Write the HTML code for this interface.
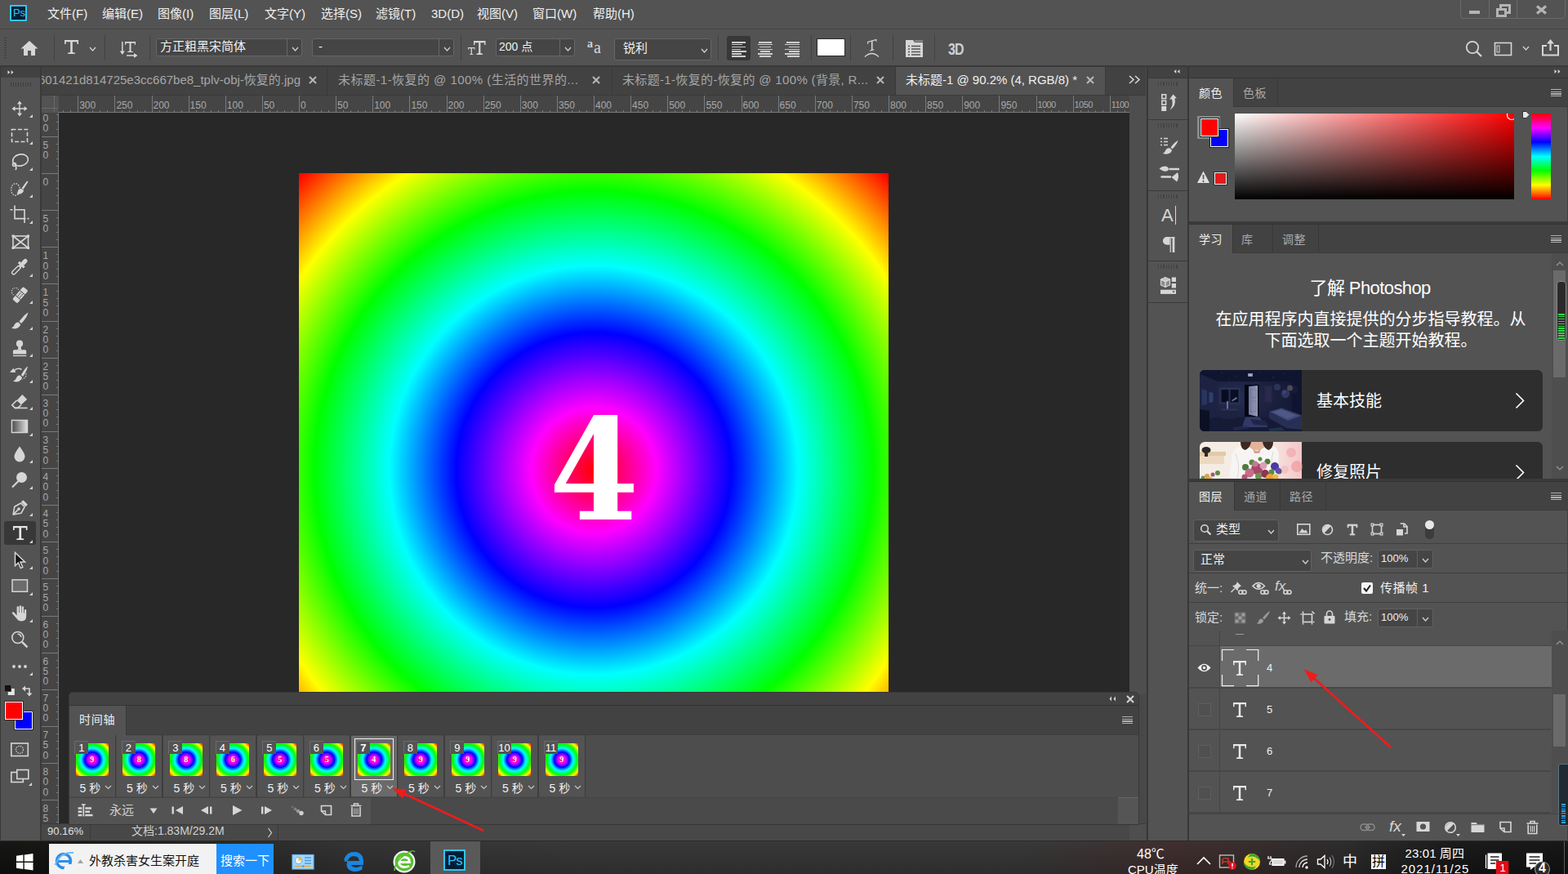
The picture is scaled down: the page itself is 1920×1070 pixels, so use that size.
<!DOCTYPE html><html lang="zh"><head><meta charset="utf-8"><title>Photoshop</title><style>
*{box-sizing:border-box;margin:0;padding:0}
html,body{width:1920px;height:1070px;overflow:hidden;background:#535353}
body{font-family:"Liberation Sans","Noto Sans CJK SC",sans-serif;font-size:15px;color:#e6e6e6;position:relative}
.a{position:absolute}
.t{position:absolute;white-space:nowrap;line-height:1}
svg{position:absolute;overflow:visible}
</style></head><body>
<div class="a" style="left:0px;top:0px;width:1920px;height:35px;background:#535353;"></div>
<div class="a" style="left:0px;top:35px;width:1920px;height:1px;background:#424242;"></div>
<div class="a" style="left:0px;top:36px;width:1920px;height:44px;background:#535353;"></div>
<div class="a" style="left:0px;top:80px;width:1920px;height:2px;background:#3a3a3a;"></div>
<div class="a" style="left:0px;top:82px;width:48.5px;height:948px;background:#535353;"></div>
<div class="a" style="left:0px;top:82px;width:48.5px;height:13px;background:#424242;"></div>
<div class="a" style="left:48.5px;top:82px;width:2.5px;height:948px;background:#3a3a3a;"></div>
<div class="a" style="left:51px;top:82px;width:1352px;height:34px;background:#424242;"></div>
<div class="a" style="left:51px;top:116px;width:1352px;height:914px;background:#454545;"></div>
<div class="a" style="left:1383px;top:117px;width:20px;height:913px;background:#4e4e4e;"></div>
<div class="a" style="left:72px;top:138px;width:1311px;height:870px;background:#282828;"></div>
<div class="a" style="left:1403px;top:82px;width:1px;height:948px;background:#4a4a4a;"></div>
<div class="a" style="left:1404px;top:82px;width:2px;height:948px;background:#383838;"></div>
<div class="a" style="left:1406px;top:82px;width:48px;height:948px;background:#535353;"></div>
<div class="a" style="left:1406px;top:82px;width:48px;height:13px;background:#424242;"></div>
<div class="a" style="left:1453.5px;top:82px;width:2.5px;height:948px;background:#383838;"></div>
<div class="a" style="left:1456px;top:82px;width:464px;height:948px;background:#535353;"></div>
<div class="a" style="left:1456px;top:82px;width:464px;height:13px;background:#424242;"></div>
<div class="a" style="left:0px;top:1030px;width:1920px;height:40px;background:#2d2d2d;"></div>
<div class="a" style="left:12px;top:6px;width:21px;height:20px;background:#001e36;border:2px solid #31c5f0;border-radius:1px"></div>
<div class="t" style="left:16px;top:9px;font-size:13px;color:#31c5f0;letter-spacing:-0.2px">Ps</div>
<div class="t" style="left:58px;top:9px;font-size:15px;color:#f0f0f0;">文件(F)</div>
<div class="t" style="left:125px;top:9px;font-size:15px;color:#f0f0f0;">编辑(E)</div>
<div class="t" style="left:193px;top:9px;font-size:15px;color:#f0f0f0;">图像(I)</div>
<div class="t" style="left:256px;top:9px;font-size:15px;color:#f0f0f0;">图层(L)</div>
<div class="t" style="left:324px;top:9px;font-size:15px;color:#f0f0f0;">文字(Y)</div>
<div class="t" style="left:393px;top:9px;font-size:15px;color:#f0f0f0;">选择(S)</div>
<div class="t" style="left:460px;top:9px;font-size:15px;color:#f0f0f0;">滤镜(T)</div>
<div class="t" style="left:528px;top:9px;font-size:15px;color:#f0f0f0;">3D(D)</div>
<div class="t" style="left:584px;top:9px;font-size:15px;color:#f0f0f0;">视图(V)</div>
<div class="t" style="left:652px;top:9px;font-size:15px;color:#f0f0f0;">窗口(W)</div>
<div class="t" style="left:726px;top:9px;font-size:15px;color:#f0f0f0;">帮助(H)</div>
<div class="a" style="left:1788px;top:-1px;width:129px;height:24px;border:1px solid #6a6a6a;border-radius:0 0 4px 4px"></div>
<div class="a" style="left:1823px;top:0px;width:1px;height:23px;background:#6a6a6a;"></div>
<div class="a" style="left:1857px;top:0px;width:1px;height:23px;background:#6a6a6a;"></div>
<div class="a" style="left:1799px;top:12.5px;width:13px;height:4.5px;background:#b4b4b4;"></div>
<svg style="left:1830px;top:4px" width="22" height="18"><rect x="7.5" y="2.5" width="11" height="9" fill="none" stroke="#b4b4b4" stroke-width="3"/><rect x="3.5" y="7.5" width="10" height="8" fill="#535353" stroke="#b4b4b4" stroke-width="3"/></svg>
<svg style="left:1880px;top:6px" width="16" height="12"><path d="M2 1.5 L13 10.5 M13 1.5 L2 10.5" stroke="#b4b4b4" stroke-width="3.2"/></svg>
<div class="a" style="left:5px;top:46px;width:3px;height:1px;background:#3e3e3e;"></div>
<div class="a" style="left:5px;top:49px;width:3px;height:1px;background:#3e3e3e;"></div>
<div class="a" style="left:5px;top:52px;width:3px;height:1px;background:#3e3e3e;"></div>
<div class="a" style="left:5px;top:55px;width:3px;height:1px;background:#3e3e3e;"></div>
<div class="a" style="left:5px;top:58px;width:3px;height:1px;background:#3e3e3e;"></div>
<div class="a" style="left:5px;top:61px;width:3px;height:1px;background:#3e3e3e;"></div>
<div class="a" style="left:5px;top:64px;width:3px;height:1px;background:#3e3e3e;"></div>
<div class="a" style="left:5px;top:67px;width:3px;height:1px;background:#3e3e3e;"></div>
<div class="a" style="left:5px;top:70px;width:3px;height:1px;background:#3e3e3e;"></div>
<svg style="left:24px;top:48px" width="24" height="22"><path d="M12 2 L1.5 11.5 H5 V20 H10 V14 H14 V20 H19 V11.5 H22.5 Z" fill="#d6d6d6"/></svg>
<div class="a" style="left:66px;top:43px;width:1px;height:31px;background:#424242;"></div>
<div class="a" style="left:128px;top:43px;width:1px;height:31px;background:#424242;"></div>
<div class="a" style="left:183px;top:43px;width:1px;height:31px;background:#424242;"></div>
<div class="a" style="left:564px;top:43px;width:1px;height:31px;background:#424242;"></div>
<div class="a" style="left:879px;top:43px;width:1px;height:31px;background:#424242;"></div>
<div class="a" style="left:993px;top:43px;width:1px;height:31px;background:#424242;"></div>
<div class="a" style="left:1041px;top:43px;width:1px;height:31px;background:#424242;"></div>
<div class="a" style="left:1093px;top:43px;width:1px;height:31px;background:#424242;"></div>
<div class="a" style="left:1144px;top:43px;width:1px;height:31px;background:#424242;"></div>
<svg style="left:79px;top:49px" width="17" height="17" viewBox="0 0 17 17" preserveAspectRatio="none"><path d="M0 0 H17 V5 H15.400 V2.200 H9.800 V14.800 Q9.800 15.500 12.800 15.600 V17 H4.200 V15.600 Q7.200 15.500 7.200 14.800 V2.200 H1.600 V5 H0 Z" fill="#d6d6d6" stroke="#d6d6d6" stroke-width="0"/></svg>
<svg style="left:109px;top:57px" width="9" height="6"><path d="M1 1 L4.5 5 L8 1" fill="none" stroke="#d0d0d0" stroke-width="1.3"/></svg>
<svg style="left:145px;top:48px" width="26" height="24"><path d="M4.800 3 V17" fill="none" stroke="#d6d6d6" stroke-width="1.500"/><path d="M1.800 14.500 H7.800 L4.800 19 Z" fill="#d6d6d6"/><path d="M10 20 H20" fill="none" stroke="#d6d6d6" stroke-width="1.500"/><path d="M19 17 V23 L23.500 20 Z" fill="#d6d6d6"/></svg>
<svg style="left:153px;top:51px" width="13" height="13" viewBox="0 0 17 17" preserveAspectRatio="none"><path d="M0 0 H17 V5 H15.400 V2.200 H9.800 V14.800 Q9.800 15.500 12.800 15.600 V17 H4.200 V15.600 Q7.200 15.500 7.200 14.800 V2.200 H1.600 V5 H0 Z" fill="#d6d6d6" stroke="#d6d6d6" stroke-width="0"/></svg>
<div class="a" style="left:191px;top:47px;width:179px;height:22px;background:#454545;border:1px solid #666;border-radius:3px"></div>
<div class="a" style="left:351px;top:48px;width:1px;height:20px;background:#666;"></div>
<div class="t" style="left:196px;top:49px;font-size:15px;color:#f0f0f0;">方正粗黑宋简体</div>
<svg style="left:357px;top:57px" width="9" height="6"><path d="M1 1 L4.5 5 L8 1" fill="none" stroke="#d0d0d0" stroke-width="1.3"/></svg>
<div class="a" style="left:382px;top:47px;width:174px;height:22px;background:#454545;border:1px solid #666;border-radius:3px"></div>
<div class="a" style="left:537px;top:48px;width:1px;height:20px;background:#666;"></div>
<div class="t" style="left:390px;top:49px;font-size:15px;color:#f0f0f0;">-</div>
<svg style="left:543px;top:57px" width="9" height="6"><path d="M1 1 L4.5 5 L8 1" fill="none" stroke="#d0d0d0" stroke-width="1.3"/></svg>
<svg style="left:573px;top:58px" width="8.5" height="9" viewBox="0 0 17 17" preserveAspectRatio="none"><path d="M0 0 H17 V5 H15.400 V2.200 H9.800 V14.800 Q9.800 15.500 12.800 15.600 V17 H4.200 V15.600 Q7.200 15.500 7.200 14.800 V2.200 H1.600 V5 H0 Z" fill="#d6d6d6" stroke="#d6d6d6" stroke-width="0"/></svg>
<svg style="left:580px;top:50px" width="14.5" height="17" viewBox="0 0 17 17" preserveAspectRatio="none"><path d="M0 0 H17 V5 H15.400 V2.200 H9.800 V14.800 Q9.800 15.500 12.800 15.600 V17 H4.200 V15.600 Q7.200 15.500 7.200 14.800 V2.200 H1.600 V5 H0 Z" fill="#d6d6d6" stroke="#d6d6d6" stroke-width="0"/></svg>
<div class="a" style="left:607px;top:47px;width:97px;height:22px;background:#454545;border:1px solid #666;border-radius:3px"></div>
<div class="a" style="left:685px;top:48px;width:1px;height:20px;background:#666;"></div>
<div class="t" style="left:611px;top:50px;font-size:14px;color:#f0f0f0;">200 点</div>
<svg style="left:691px;top:57px" width="9" height="6"><path d="M1 1 L4.5 5 L8 1" fill="none" stroke="#d0d0d0" stroke-width="1.3"/></svg>
<div class="t" style="left:719px;top:47px;font-size:14px;color:#d6d6d6;font-family:'Liberation Serif',serif;font-weight:bold">a</div>
<div class="t" style="left:727px;top:48px;font-size:20px;color:#d6d6d6;font-family:'Liberation Serif',serif">a</div>
<div class="a" style="left:752px;top:47px;width:119px;height:27px;background:#454545;border:1px solid #666;border-radius:3px"></div>
<div class="t" style="left:763px;top:51px;font-size:15px;color:#f0f0f0;">锐利</div>
<svg style="left:858px;top:59px" width="9" height="6"><path d="M1 1 L4.5 5 L8 1" fill="none" stroke="#d0d0d0" stroke-width="1.3"/></svg>
<div class="a" style="left:890px;top:44px;width:29px;height:30px;background:#383838;border-radius:3px"></div>
<div class="a" style="left:896px;top:51.0px;width:17px;height:1.500px;background:#cdcdcd"></div>
<div class="a" style="left:896px;top:53.9px;width:13px;height:1.500px;background:#cdcdcd"></div>
<div class="a" style="left:896px;top:56.7px;width:17px;height:1.500px;background:#cdcdcd"></div>
<div class="a" style="left:896px;top:59.5px;width:11px;height:1.500px;background:#cdcdcd"></div>
<div class="a" style="left:896px;top:62.4px;width:18px;height:1.500px;background:#cdcdcd"></div>
<div class="a" style="left:896px;top:65.2px;width:12px;height:1.500px;background:#cdcdcd"></div>
<div class="a" style="left:896px;top:68.1px;width:17px;height:1.500px;background:#cdcdcd"></div>
<div class="a" style="left:929.0px;top:51.0px;width:16px;height:1.500px;background:#cdcdcd"></div>
<div class="a" style="left:928.0px;top:53.9px;width:18px;height:1.500px;background:#cdcdcd"></div>
<div class="a" style="left:930.0px;top:56.7px;width:14px;height:1.500px;background:#cdcdcd"></div>
<div class="a" style="left:928.0px;top:59.5px;width:18px;height:1.500px;background:#cdcdcd"></div>
<div class="a" style="left:931.0px;top:62.4px;width:12px;height:1.500px;background:#cdcdcd"></div>
<div class="a" style="left:928.0px;top:65.2px;width:18px;height:1.500px;background:#cdcdcd"></div>
<div class="a" style="left:930.0px;top:68.1px;width:14px;height:1.500px;background:#cdcdcd"></div>
<div class="a" style="left:963px;top:51.0px;width:16px;height:1.500px;background:#cdcdcd"></div>
<div class="a" style="left:961px;top:53.9px;width:18px;height:1.500px;background:#cdcdcd"></div>
<div class="a" style="left:966px;top:56.7px;width:13px;height:1.500px;background:#cdcdcd"></div>
<div class="a" style="left:961px;top:59.5px;width:18px;height:1.500px;background:#cdcdcd"></div>
<div class="a" style="left:966px;top:62.4px;width:13px;height:1.500px;background:#cdcdcd"></div>
<div class="a" style="left:961px;top:65.2px;width:18px;height:1.500px;background:#cdcdcd"></div>
<div class="a" style="left:964px;top:68.1px;width:15px;height:1.500px;background:#cdcdcd"></div>
<div class="a" style="left:1000px;top:47px;width:35px;height:22px;background:#fff;border:1px solid #2a2a2a"></div>
<svg style="left:1059px;top:48px" width="17.500" height="15.750" viewBox="0 0 20 18"><g transform="translate(10 9) skewY(-16) translate(-10 -9)"><path d="M3.500 1.500 H16.500 V5 H15.300 V3 H10.900 V14.300 Q10.900 14.800 13 14.900 V16 H7 V14.900 Q9.100 14.800 9.100 14.300 V3 H4.700 V5 H3.500 Z" fill="#d6d6d6"/></g></svg>
<svg style="left:1057px;top:62px" width="22" height="10"><path d="M2 7.500 Q10.500 -0.500 19 7.500" fill="none" stroke="#d6d6d6" stroke-width="1.500"/></svg>
<svg style="left:1108px;top:48px" width="24" height="24"><path d="M1 1 H10 L12 4 H22 V22 H1 Z" fill="#d6d6d6"/><rect x="12" y="1.5" width="10" height="1.5" fill="#9a9a9a"/><g stroke="#535353" stroke-width="1.5"><path d="M4 8.5 H6 M8 8.5 H19 M4 12 H6 M8 12 H19 M4 15.5 H6 M8 15.5 H19 M4 19 H6 M8 19 H19"/></g></svg>
<div class="t" style="left:1161px;top:49px;font-size:21px;color:#cfcfcf;font-weight:bold;letter-spacing:-1px;transform:scaleX(0.760);transform-origin:0 0">3D</div>
<svg style="left:1793px;top:48px" width="24" height="24"><circle cx="10" cy="10" r="7.2" fill="none" stroke="#d6d6d6" stroke-width="1.8"/><path d="M15.5 15.5 L21 21" stroke="#d6d6d6" stroke-width="2.2"/></svg>
<svg style="left:1829px;top:51px" width="24" height="19"><rect x="1.5" y="1.5" width="20" height="15" fill="none" stroke="#d6d6d6" stroke-width="1.6"/><rect x="4" y="5" width="3" height="8" fill="none" stroke="#d6d6d6" stroke-width="1"/></svg>
<svg style="left:1864px;top:56px" width="9" height="6"><path d="M1 1 L4.5 5 L8 1" fill="none" stroke="#d0d0d0" stroke-width="1.3"/></svg>
<svg style="left:1887px;top:47px" width="24" height="23"><path d="M7 9 H2 V20.5 H21 V9 H16" fill="none" stroke="#d6d6d6" stroke-width="2"/><path d="M11.5 15 V4" stroke="#d6d6d6" stroke-width="2.2"/><path d="M7 6.5 L11.5 1 L16 6.5 Z" fill="#d6d6d6"/></svg>
<svg style="left:9px;top:85px" width="9" height="7"><path d="M0.500 1 L3.300 3.500 L0.500 6 Z M4.700 1 L7.500 3.500 L4.700 6 Z" fill="#d6d6d6"/></svg>
<svg style="left:1437px;top:84px" width="9" height="7"><path d="M3.300 1 L0.500 3.500 L3.300 6 Z M7.500 1 L4.700 3.500 L7.500 6 Z" fill="#d6d6d6"/></svg>
<svg style="left:1903px;top:84px" width="9" height="7"><path d="M0.500 1 L3.300 3.500 L0.500 6 Z M4.700 1 L7.500 3.500 L4.700 6 Z" fill="#d6d6d6"/></svg>
<div class="a" style="left:1097px;top:82px;width:257px;height:34px;background:#535353;"></div>
<div class="a" style="left:400px;top:82px;width:1px;height:34px;background:#3a3a3a;"></div>
<div class="a" style="left:749px;top:82px;width:1px;height:34px;background:#3a3a3a;"></div>
<div class="a" style="left:1096px;top:82px;width:1px;height:34px;background:#3a3a3a;"></div>
<div class="a" style="left:1353px;top:82px;width:1px;height:34px;background:#3a3a3a;"></div>
<div class="a" style="left:51px;top:82px;width:331px;height:34px;overflow:hidden"><div class="t" style="right:14px;top:8px;font-size:15px;color:#a6a6a6">601421d814725e3cc667be8_tplv-obj-恢复的.jpg</div></div>
<div class="t" style="letter-spacing:0.46px;left:414px;top:90px;font-size:15px;color:#a6a6a6;">未标题-1-恢复的 @ 100% (生活的世界的...</div>
<div class="t" style="letter-spacing:0.34px;left:762px;top:90px;font-size:15px;color:#a6a6a6;">未标题-1-恢复的-恢复的 @ 100% (背景, R...</div>
<div class="t" style="letter-spacing:-0.01px;left:1109px;top:90px;font-size:15px;color:#f0f0f0;">未标题-1 @ 90.2% (4, RGB/8) *</div>
<svg style="left:378px;top:93px" width="10" height="10"><path d="M1 1 L9 9 M9 1 L1 9" stroke="#b8b8b8" stroke-width="2"/></svg>
<svg style="left:725px;top:93px" width="10" height="10"><path d="M1 1 L9 9 M9 1 L1 9" stroke="#b8b8b8" stroke-width="2"/></svg>
<svg style="left:1073px;top:93px" width="10" height="10"><path d="M1 1 L9 9 M9 1 L1 9" stroke="#b8b8b8" stroke-width="2"/></svg>
<svg style="left:1330px;top:93px" width="10" height="10"><path d="M1 1 L9 9 M9 1 L1 9" stroke="#b8b8b8" stroke-width="2"/></svg>
<svg style="left:1382px;top:92px" width="16" height="12"><path d="M1 1 L6 5.5 L1 10 M8 1 L13 5.5 L8 10" fill="none" stroke="#d6d6d6" stroke-width="1.6"/></svg>
<div class="a" style="left:52px;top:116px;width:1351px;height:1px;background:#3a3a3a;"></div>
<div class="a" style="left:51px;top:117px;width:21px;height:21px;background:#535353;"></div>
<div class="a" style="left:51px;top:132px;width:19px;height:0;border-top:1px dotted #7c7c7c"></div>
<div class="a" style="left:66px;top:117px;width:0;height:20px;border-left:1px dotted #7c7c7c"></div>
<div class="a" style="left:72px;top:117px;width:1311px;height:21px;overflow:hidden;background:#454545">
<div class="a" style="left:-21.9px;top:0;width:1px;height:21px;background:#7a7a7a"></div>
<div class="t" style="left:-19.9px;top:5.500px;font-size:12px;color:#a8a8a8;">350</div>
<div class="a" style="left:-12.8px;top:18px;width:1px;height:3px;background:#7a7a7a"></div>
<div class="a" style="left:-3.8px;top:18px;width:1px;height:3px;background:#7a7a7a"></div>
<div class="a" style="left:5.2px;top:18px;width:1px;height:3px;background:#7a7a7a"></div>
<div class="a" style="left:14.2px;top:18px;width:1px;height:3px;background:#7a7a7a"></div>
<div class="a" style="left:23.2px;top:0;width:1px;height:21px;background:#7a7a7a"></div>
<div class="t" style="left:25.2px;top:5.500px;font-size:12px;color:#a8a8a8;">300</div>
<div class="a" style="left:32.3px;top:18px;width:1px;height:3px;background:#7a7a7a"></div>
<div class="a" style="left:41.3px;top:18px;width:1px;height:3px;background:#7a7a7a"></div>
<div class="a" style="left:50.3px;top:18px;width:1px;height:3px;background:#7a7a7a"></div>
<div class="a" style="left:59.4px;top:18px;width:1px;height:3px;background:#7a7a7a"></div>
<div class="a" style="left:68.4px;top:0;width:1px;height:21px;background:#7a7a7a"></div>
<div class="t" style="left:70.4px;top:5.500px;font-size:12px;color:#a8a8a8;">250</div>
<div class="a" style="left:77.4px;top:18px;width:1px;height:3px;background:#7a7a7a"></div>
<div class="a" style="left:86.4px;top:18px;width:1px;height:3px;background:#7a7a7a"></div>
<div class="a" style="left:95.5px;top:18px;width:1px;height:3px;background:#7a7a7a"></div>
<div class="a" style="left:104.5px;top:18px;width:1px;height:3px;background:#7a7a7a"></div>
<div class="a" style="left:113.5px;top:0;width:1px;height:21px;background:#7a7a7a"></div>
<div class="t" style="left:115.5px;top:5.500px;font-size:12px;color:#a8a8a8;">200</div>
<div class="a" style="left:122.5px;top:18px;width:1px;height:3px;background:#7a7a7a"></div>
<div class="a" style="left:131.6px;top:18px;width:1px;height:3px;background:#7a7a7a"></div>
<div class="a" style="left:140.6px;top:18px;width:1px;height:3px;background:#7a7a7a"></div>
<div class="a" style="left:149.6px;top:18px;width:1px;height:3px;background:#7a7a7a"></div>
<div class="a" style="left:158.6px;top:0;width:1px;height:21px;background:#7a7a7a"></div>
<div class="t" style="left:160.6px;top:5.500px;font-size:12px;color:#a8a8a8;">150</div>
<div class="a" style="left:167.7px;top:18px;width:1px;height:3px;background:#7a7a7a"></div>
<div class="a" style="left:176.7px;top:18px;width:1px;height:3px;background:#7a7a7a"></div>
<div class="a" style="left:185.7px;top:18px;width:1px;height:3px;background:#7a7a7a"></div>
<div class="a" style="left:194.7px;top:18px;width:1px;height:3px;background:#7a7a7a"></div>
<div class="a" style="left:203.8px;top:0;width:1px;height:21px;background:#7a7a7a"></div>
<div class="t" style="left:205.8px;top:5.500px;font-size:12px;color:#a8a8a8;">100</div>
<div class="a" style="left:212.8px;top:18px;width:1px;height:3px;background:#7a7a7a"></div>
<div class="a" style="left:221.8px;top:18px;width:1px;height:3px;background:#7a7a7a"></div>
<div class="a" style="left:230.8px;top:18px;width:1px;height:3px;background:#7a7a7a"></div>
<div class="a" style="left:239.8px;top:18px;width:1px;height:3px;background:#7a7a7a"></div>
<div class="a" style="left:248.9px;top:0;width:1px;height:21px;background:#7a7a7a"></div>
<div class="t" style="left:250.9px;top:5.500px;font-size:12px;color:#a8a8a8;">50</div>
<div class="a" style="left:257.9px;top:18px;width:1px;height:3px;background:#7a7a7a"></div>
<div class="a" style="left:266.9px;top:18px;width:1px;height:3px;background:#7a7a7a"></div>
<div class="a" style="left:275.9px;top:18px;width:1px;height:3px;background:#7a7a7a"></div>
<div class="a" style="left:285.0px;top:18px;width:1px;height:3px;background:#7a7a7a"></div>
<div class="a" style="left:294.0px;top:0;width:1px;height:21px;background:#7a7a7a"></div>
<div class="t" style="left:296.0px;top:5.500px;font-size:12px;color:#a8a8a8;">0</div>
<div class="a" style="left:303.0px;top:18px;width:1px;height:3px;background:#7a7a7a"></div>
<div class="a" style="left:312.1px;top:18px;width:1px;height:3px;background:#7a7a7a"></div>
<div class="a" style="left:321.1px;top:18px;width:1px;height:3px;background:#7a7a7a"></div>
<div class="a" style="left:330.1px;top:18px;width:1px;height:3px;background:#7a7a7a"></div>
<div class="a" style="left:339.1px;top:0;width:1px;height:21px;background:#7a7a7a"></div>
<div class="t" style="left:341.1px;top:5.500px;font-size:12px;color:#a8a8a8;">50</div>
<div class="a" style="left:348.1px;top:18px;width:1px;height:3px;background:#7a7a7a"></div>
<div class="a" style="left:357.2px;top:18px;width:1px;height:3px;background:#7a7a7a"></div>
<div class="a" style="left:366.2px;top:18px;width:1px;height:3px;background:#7a7a7a"></div>
<div class="a" style="left:375.2px;top:18px;width:1px;height:3px;background:#7a7a7a"></div>
<div class="a" style="left:384.2px;top:0;width:1px;height:21px;background:#7a7a7a"></div>
<div class="t" style="left:386.2px;top:5.500px;font-size:12px;color:#a8a8a8;">100</div>
<div class="a" style="left:393.3px;top:18px;width:1px;height:3px;background:#7a7a7a"></div>
<div class="a" style="left:402.3px;top:18px;width:1px;height:3px;background:#7a7a7a"></div>
<div class="a" style="left:411.3px;top:18px;width:1px;height:3px;background:#7a7a7a"></div>
<div class="a" style="left:420.4px;top:18px;width:1px;height:3px;background:#7a7a7a"></div>
<div class="a" style="left:429.4px;top:0;width:1px;height:21px;background:#7a7a7a"></div>
<div class="t" style="left:431.4px;top:5.500px;font-size:12px;color:#a8a8a8;">150</div>
<div class="a" style="left:438.4px;top:18px;width:1px;height:3px;background:#7a7a7a"></div>
<div class="a" style="left:447.4px;top:18px;width:1px;height:3px;background:#7a7a7a"></div>
<div class="a" style="left:456.4px;top:18px;width:1px;height:3px;background:#7a7a7a"></div>
<div class="a" style="left:465.5px;top:18px;width:1px;height:3px;background:#7a7a7a"></div>
<div class="a" style="left:474.5px;top:0;width:1px;height:21px;background:#7a7a7a"></div>
<div class="t" style="left:476.5px;top:5.500px;font-size:12px;color:#a8a8a8;">200</div>
<div class="a" style="left:483.5px;top:18px;width:1px;height:3px;background:#7a7a7a"></div>
<div class="a" style="left:492.6px;top:18px;width:1px;height:3px;background:#7a7a7a"></div>
<div class="a" style="left:501.6px;top:18px;width:1px;height:3px;background:#7a7a7a"></div>
<div class="a" style="left:510.6px;top:18px;width:1px;height:3px;background:#7a7a7a"></div>
<div class="a" style="left:519.6px;top:0;width:1px;height:21px;background:#7a7a7a"></div>
<div class="t" style="left:521.6px;top:5.500px;font-size:12px;color:#a8a8a8;">250</div>
<div class="a" style="left:528.6px;top:18px;width:1px;height:3px;background:#7a7a7a"></div>
<div class="a" style="left:537.7px;top:18px;width:1px;height:3px;background:#7a7a7a"></div>
<div class="a" style="left:546.7px;top:18px;width:1px;height:3px;background:#7a7a7a"></div>
<div class="a" style="left:555.7px;top:18px;width:1px;height:3px;background:#7a7a7a"></div>
<div class="a" style="left:564.8px;top:0;width:1px;height:21px;background:#7a7a7a"></div>
<div class="t" style="left:566.8px;top:5.500px;font-size:12px;color:#a8a8a8;">300</div>
<div class="a" style="left:573.8px;top:18px;width:1px;height:3px;background:#7a7a7a"></div>
<div class="a" style="left:582.8px;top:18px;width:1px;height:3px;background:#7a7a7a"></div>
<div class="a" style="left:591.8px;top:18px;width:1px;height:3px;background:#7a7a7a"></div>
<div class="a" style="left:600.9px;top:18px;width:1px;height:3px;background:#7a7a7a"></div>
<div class="a" style="left:609.9px;top:0;width:1px;height:21px;background:#7a7a7a"></div>
<div class="t" style="left:611.9px;top:5.500px;font-size:12px;color:#a8a8a8;">350</div>
<div class="a" style="left:618.9px;top:18px;width:1px;height:3px;background:#7a7a7a"></div>
<div class="a" style="left:627.9px;top:18px;width:1px;height:3px;background:#7a7a7a"></div>
<div class="a" style="left:637.0px;top:18px;width:1px;height:3px;background:#7a7a7a"></div>
<div class="a" style="left:646.0px;top:18px;width:1px;height:3px;background:#7a7a7a"></div>
<div class="a" style="left:655.0px;top:0;width:1px;height:21px;background:#7a7a7a"></div>
<div class="t" style="left:657.0px;top:5.500px;font-size:12px;color:#a8a8a8;">400</div>
<div class="a" style="left:664.0px;top:18px;width:1px;height:3px;background:#7a7a7a"></div>
<div class="a" style="left:673.0px;top:18px;width:1px;height:3px;background:#7a7a7a"></div>
<div class="a" style="left:682.1px;top:18px;width:1px;height:3px;background:#7a7a7a"></div>
<div class="a" style="left:691.1px;top:18px;width:1px;height:3px;background:#7a7a7a"></div>
<div class="a" style="left:700.1px;top:0;width:1px;height:21px;background:#7a7a7a"></div>
<div class="t" style="left:702.1px;top:5.500px;font-size:12px;color:#a8a8a8;">450</div>
<div class="a" style="left:709.1px;top:18px;width:1px;height:3px;background:#7a7a7a"></div>
<div class="a" style="left:718.2px;top:18px;width:1px;height:3px;background:#7a7a7a"></div>
<div class="a" style="left:727.2px;top:18px;width:1px;height:3px;background:#7a7a7a"></div>
<div class="a" style="left:736.2px;top:18px;width:1px;height:3px;background:#7a7a7a"></div>
<div class="a" style="left:745.2px;top:0;width:1px;height:21px;background:#7a7a7a"></div>
<div class="t" style="left:747.2px;top:5.500px;font-size:12px;color:#a8a8a8;">500</div>
<div class="a" style="left:754.3px;top:18px;width:1px;height:3px;background:#7a7a7a"></div>
<div class="a" style="left:763.3px;top:18px;width:1px;height:3px;background:#7a7a7a"></div>
<div class="a" style="left:772.3px;top:18px;width:1px;height:3px;background:#7a7a7a"></div>
<div class="a" style="left:781.4px;top:18px;width:1px;height:3px;background:#7a7a7a"></div>
<div class="a" style="left:790.4px;top:0;width:1px;height:21px;background:#7a7a7a"></div>
<div class="t" style="left:792.4px;top:5.500px;font-size:12px;color:#a8a8a8;">550</div>
<div class="a" style="left:799.4px;top:18px;width:1px;height:3px;background:#7a7a7a"></div>
<div class="a" style="left:808.4px;top:18px;width:1px;height:3px;background:#7a7a7a"></div>
<div class="a" style="left:817.5px;top:18px;width:1px;height:3px;background:#7a7a7a"></div>
<div class="a" style="left:826.5px;top:18px;width:1px;height:3px;background:#7a7a7a"></div>
<div class="a" style="left:835.5px;top:0;width:1px;height:21px;background:#7a7a7a"></div>
<div class="t" style="left:837.5px;top:5.500px;font-size:12px;color:#a8a8a8;">600</div>
<div class="a" style="left:844.5px;top:18px;width:1px;height:3px;background:#7a7a7a"></div>
<div class="a" style="left:853.5px;top:18px;width:1px;height:3px;background:#7a7a7a"></div>
<div class="a" style="left:862.6px;top:18px;width:1px;height:3px;background:#7a7a7a"></div>
<div class="a" style="left:871.6px;top:18px;width:1px;height:3px;background:#7a7a7a"></div>
<div class="a" style="left:880.6px;top:0;width:1px;height:21px;background:#7a7a7a"></div>
<div class="t" style="left:882.6px;top:5.500px;font-size:12px;color:#a8a8a8;">650</div>
<div class="a" style="left:889.6px;top:18px;width:1px;height:3px;background:#7a7a7a"></div>
<div class="a" style="left:898.7px;top:18px;width:1px;height:3px;background:#7a7a7a"></div>
<div class="a" style="left:907.7px;top:18px;width:1px;height:3px;background:#7a7a7a"></div>
<div class="a" style="left:916.7px;top:18px;width:1px;height:3px;background:#7a7a7a"></div>
<div class="a" style="left:925.8px;top:0;width:1px;height:21px;background:#7a7a7a"></div>
<div class="t" style="left:927.8px;top:5.500px;font-size:12px;color:#a8a8a8;">700</div>
<div class="a" style="left:934.8px;top:18px;width:1px;height:3px;background:#7a7a7a"></div>
<div class="a" style="left:943.8px;top:18px;width:1px;height:3px;background:#7a7a7a"></div>
<div class="a" style="left:952.8px;top:18px;width:1px;height:3px;background:#7a7a7a"></div>
<div class="a" style="left:961.9px;top:18px;width:1px;height:3px;background:#7a7a7a"></div>
<div class="a" style="left:970.9px;top:0;width:1px;height:21px;background:#7a7a7a"></div>
<div class="t" style="left:972.9px;top:5.500px;font-size:12px;color:#a8a8a8;">750</div>
<div class="a" style="left:979.9px;top:18px;width:1px;height:3px;background:#7a7a7a"></div>
<div class="a" style="left:988.9px;top:18px;width:1px;height:3px;background:#7a7a7a"></div>
<div class="a" style="left:998.0px;top:18px;width:1px;height:3px;background:#7a7a7a"></div>
<div class="a" style="left:1007.0px;top:18px;width:1px;height:3px;background:#7a7a7a"></div>
<div class="a" style="left:1016.0px;top:0;width:1px;height:21px;background:#7a7a7a"></div>
<div class="t" style="left:1018.0px;top:5.500px;font-size:12px;color:#a8a8a8;">800</div>
<div class="a" style="left:1025.0px;top:18px;width:1px;height:3px;background:#7a7a7a"></div>
<div class="a" style="left:1034.0px;top:18px;width:1px;height:3px;background:#7a7a7a"></div>
<div class="a" style="left:1043.1px;top:18px;width:1px;height:3px;background:#7a7a7a"></div>
<div class="a" style="left:1052.1px;top:18px;width:1px;height:3px;background:#7a7a7a"></div>
<div class="a" style="left:1061.1px;top:0;width:1px;height:21px;background:#7a7a7a"></div>
<div class="t" style="left:1063.1px;top:5.500px;font-size:12px;color:#a8a8a8;">850</div>
<div class="a" style="left:1070.2px;top:18px;width:1px;height:3px;background:#7a7a7a"></div>
<div class="a" style="left:1079.2px;top:18px;width:1px;height:3px;background:#7a7a7a"></div>
<div class="a" style="left:1088.2px;top:18px;width:1px;height:3px;background:#7a7a7a"></div>
<div class="a" style="left:1097.2px;top:18px;width:1px;height:3px;background:#7a7a7a"></div>
<div class="a" style="left:1106.2px;top:0;width:1px;height:21px;background:#7a7a7a"></div>
<div class="t" style="left:1108.2px;top:5.500px;font-size:12px;color:#a8a8a8;">900</div>
<div class="a" style="left:1115.3px;top:18px;width:1px;height:3px;background:#7a7a7a"></div>
<div class="a" style="left:1124.3px;top:18px;width:1px;height:3px;background:#7a7a7a"></div>
<div class="a" style="left:1133.3px;top:18px;width:1px;height:3px;background:#7a7a7a"></div>
<div class="a" style="left:1142.3px;top:18px;width:1px;height:3px;background:#7a7a7a"></div>
<div class="a" style="left:1151.4px;top:0;width:1px;height:21px;background:#7a7a7a"></div>
<div class="t" style="left:1153.4px;top:5.500px;font-size:12px;color:#a8a8a8;">950</div>
<div class="a" style="left:1160.4px;top:18px;width:1px;height:3px;background:#7a7a7a"></div>
<div class="a" style="left:1169.4px;top:18px;width:1px;height:3px;background:#7a7a7a"></div>
<div class="a" style="left:1178.5px;top:18px;width:1px;height:3px;background:#7a7a7a"></div>
<div class="a" style="left:1187.5px;top:18px;width:1px;height:3px;background:#7a7a7a"></div>
<div class="a" style="left:1196.5px;top:0;width:1px;height:21px;background:#7a7a7a"></div>
<div class="t" style="left:1198.5px;top:5.500px;font-size:11px;color:#a8a8a8;letter-spacing:-0.6px;">1000</div>
<div class="a" style="left:1205.5px;top:18px;width:1px;height:3px;background:#7a7a7a"></div>
<div class="a" style="left:1214.5px;top:18px;width:1px;height:3px;background:#7a7a7a"></div>
<div class="a" style="left:1223.6px;top:18px;width:1px;height:3px;background:#7a7a7a"></div>
<div class="a" style="left:1232.6px;top:18px;width:1px;height:3px;background:#7a7a7a"></div>
<div class="a" style="left:1241.6px;top:0;width:1px;height:21px;background:#7a7a7a"></div>
<div class="t" style="left:1243.6px;top:5.500px;font-size:11px;color:#a8a8a8;letter-spacing:-0.6px;">1050</div>
<div class="a" style="left:1250.7px;top:18px;width:1px;height:3px;background:#7a7a7a"></div>
<div class="a" style="left:1259.7px;top:18px;width:1px;height:3px;background:#7a7a7a"></div>
<div class="a" style="left:1268.7px;top:18px;width:1px;height:3px;background:#7a7a7a"></div>
<div class="a" style="left:1277.7px;top:18px;width:1px;height:3px;background:#7a7a7a"></div>
<div class="a" style="left:1286.8px;top:0;width:1px;height:21px;background:#7a7a7a"></div>
<div class="t" style="left:1288.8px;top:5.500px;font-size:11px;color:#a8a8a8;letter-spacing:-0.6px;">1100</div>
<div class="a" style="left:1295.8px;top:18px;width:1px;height:3px;background:#7a7a7a"></div>
<div class="a" style="left:1304.8px;top:18px;width:1px;height:3px;background:#7a7a7a"></div>
<div class="a" style="left:1313.8px;top:18px;width:1px;height:3px;background:#7a7a7a"></div>
<div class="a" style="left:1322.8px;top:18px;width:1px;height:3px;background:#7a7a7a"></div>
<div class="a" style="left:1331.9px;top:0;width:1px;height:21px;background:#7a7a7a"></div>
<div class="t" style="left:1333.9px;top:5.500px;font-size:11px;color:#a8a8a8;letter-spacing:-0.6px;">1150</div>
<div class="a" style="left:1340.9px;top:18px;width:1px;height:3px;background:#7a7a7a"></div>
<div class="a" style="left:1349.9px;top:18px;width:1px;height:3px;background:#7a7a7a"></div>
<div class="a" style="left:1359.0px;top:18px;width:1px;height:3px;background:#7a7a7a"></div>
<div class="a" style="left:1368.0px;top:18px;width:1px;height:3px;background:#7a7a7a"></div>
</div>
<div class="a" style="left:72px;top:137px;width:1311px;height:1px;background:#7a7a7a;"></div>
<div class="a" style="left:51px;top:138px;width:21px;height:870px;overflow:hidden;background:#454545">
<div class="a" style="left:0;top:-16.2px;width:21px;height:1px;background:#7a7a7a"></div>
<div class="t" style="left:1.500px;top:-11.2px;font-size:12px;color:#a8a8a8">1</div>
<div class="t" style="left:1.500px;top:1.1px;font-size:12px;color:#a8a8a8">0</div>
<div class="t" style="left:1.500px;top:13.4px;font-size:12px;color:#a8a8a8">0</div>
<div class="a" style="left:18px;top:-7.2px;width:3px;height:1px;background:#7a7a7a"></div>
<div class="a" style="left:18px;top:1.8px;width:3px;height:1px;background:#7a7a7a"></div>
<div class="a" style="left:18px;top:10.8px;width:3px;height:1px;background:#7a7a7a"></div>
<div class="a" style="left:18px;top:19.9px;width:3px;height:1px;background:#7a7a7a"></div>
<div class="a" style="left:0;top:28.9px;width:21px;height:1px;background:#7a7a7a"></div>
<div class="t" style="left:1.500px;top:33.9px;font-size:12px;color:#a8a8a8">5</div>
<div class="t" style="left:1.500px;top:46.2px;font-size:12px;color:#a8a8a8">0</div>
<div class="a" style="left:18px;top:37.9px;width:3px;height:1px;background:#7a7a7a"></div>
<div class="a" style="left:18px;top:46.9px;width:3px;height:1px;background:#7a7a7a"></div>
<div class="a" style="left:18px;top:56.0px;width:3px;height:1px;background:#7a7a7a"></div>
<div class="a" style="left:18px;top:65.0px;width:3px;height:1px;background:#7a7a7a"></div>
<div class="a" style="left:0;top:74.0px;width:21px;height:1px;background:#7a7a7a"></div>
<div class="t" style="left:1.500px;top:79.0px;font-size:12px;color:#a8a8a8">0</div>
<div class="a" style="left:18px;top:83.0px;width:3px;height:1px;background:#7a7a7a"></div>
<div class="a" style="left:18px;top:92.0px;width:3px;height:1px;background:#7a7a7a"></div>
<div class="a" style="left:18px;top:101.1px;width:3px;height:1px;background:#7a7a7a"></div>
<div class="a" style="left:18px;top:110.1px;width:3px;height:1px;background:#7a7a7a"></div>
<div class="a" style="left:0;top:119.1px;width:21px;height:1px;background:#7a7a7a"></div>
<div class="t" style="left:1.500px;top:124.1px;font-size:12px;color:#a8a8a8">5</div>
<div class="t" style="left:1.500px;top:136.4px;font-size:12px;color:#a8a8a8">0</div>
<div class="a" style="left:18px;top:128.2px;width:3px;height:1px;background:#7a7a7a"></div>
<div class="a" style="left:18px;top:137.2px;width:3px;height:1px;background:#7a7a7a"></div>
<div class="a" style="left:18px;top:146.2px;width:3px;height:1px;background:#7a7a7a"></div>
<div class="a" style="left:18px;top:155.2px;width:3px;height:1px;background:#7a7a7a"></div>
<div class="a" style="left:0;top:164.2px;width:21px;height:1px;background:#7a7a7a"></div>
<div class="t" style="left:1.500px;top:169.2px;font-size:12px;color:#a8a8a8">1</div>
<div class="t" style="left:1.500px;top:181.6px;font-size:12px;color:#a8a8a8">0</div>
<div class="t" style="left:1.500px;top:193.8px;font-size:12px;color:#a8a8a8">0</div>
<div class="a" style="left:18px;top:173.3px;width:3px;height:1px;background:#7a7a7a"></div>
<div class="a" style="left:18px;top:182.3px;width:3px;height:1px;background:#7a7a7a"></div>
<div class="a" style="left:18px;top:191.3px;width:3px;height:1px;background:#7a7a7a"></div>
<div class="a" style="left:18px;top:200.3px;width:3px;height:1px;background:#7a7a7a"></div>
<div class="a" style="left:0;top:209.4px;width:21px;height:1px;background:#7a7a7a"></div>
<div class="t" style="left:1.500px;top:214.4px;font-size:12px;color:#a8a8a8">1</div>
<div class="t" style="left:1.500px;top:226.7px;font-size:12px;color:#a8a8a8">5</div>
<div class="t" style="left:1.500px;top:239.0px;font-size:12px;color:#a8a8a8">0</div>
<div class="a" style="left:18px;top:218.4px;width:3px;height:1px;background:#7a7a7a"></div>
<div class="a" style="left:18px;top:227.4px;width:3px;height:1px;background:#7a7a7a"></div>
<div class="a" style="left:18px;top:236.4px;width:3px;height:1px;background:#7a7a7a"></div>
<div class="a" style="left:18px;top:245.5px;width:3px;height:1px;background:#7a7a7a"></div>
<div class="a" style="left:0;top:254.5px;width:21px;height:1px;background:#7a7a7a"></div>
<div class="t" style="left:1.500px;top:259.5px;font-size:12px;color:#a8a8a8">2</div>
<div class="t" style="left:1.500px;top:271.8px;font-size:12px;color:#a8a8a8">0</div>
<div class="t" style="left:1.500px;top:284.1px;font-size:12px;color:#a8a8a8">0</div>
<div class="a" style="left:18px;top:263.5px;width:3px;height:1px;background:#7a7a7a"></div>
<div class="a" style="left:18px;top:272.6px;width:3px;height:1px;background:#7a7a7a"></div>
<div class="a" style="left:18px;top:281.6px;width:3px;height:1px;background:#7a7a7a"></div>
<div class="a" style="left:18px;top:290.6px;width:3px;height:1px;background:#7a7a7a"></div>
<div class="a" style="left:0;top:299.6px;width:21px;height:1px;background:#7a7a7a"></div>
<div class="t" style="left:1.500px;top:304.6px;font-size:12px;color:#a8a8a8">2</div>
<div class="t" style="left:1.500px;top:316.9px;font-size:12px;color:#a8a8a8">5</div>
<div class="t" style="left:1.500px;top:329.2px;font-size:12px;color:#a8a8a8">0</div>
<div class="a" style="left:18px;top:308.6px;width:3px;height:1px;background:#7a7a7a"></div>
<div class="a" style="left:18px;top:317.7px;width:3px;height:1px;background:#7a7a7a"></div>
<div class="a" style="left:18px;top:326.7px;width:3px;height:1px;background:#7a7a7a"></div>
<div class="a" style="left:18px;top:335.7px;width:3px;height:1px;background:#7a7a7a"></div>
<div class="a" style="left:0;top:344.8px;width:21px;height:1px;background:#7a7a7a"></div>
<div class="t" style="left:1.500px;top:349.8px;font-size:12px;color:#a8a8a8">3</div>
<div class="t" style="left:1.500px;top:362.1px;font-size:12px;color:#a8a8a8">0</div>
<div class="t" style="left:1.500px;top:374.4px;font-size:12px;color:#a8a8a8">0</div>
<div class="a" style="left:18px;top:353.8px;width:3px;height:1px;background:#7a7a7a"></div>
<div class="a" style="left:18px;top:362.8px;width:3px;height:1px;background:#7a7a7a"></div>
<div class="a" style="left:18px;top:371.8px;width:3px;height:1px;background:#7a7a7a"></div>
<div class="a" style="left:18px;top:380.9px;width:3px;height:1px;background:#7a7a7a"></div>
<div class="a" style="left:0;top:389.9px;width:21px;height:1px;background:#7a7a7a"></div>
<div class="t" style="left:1.500px;top:394.9px;font-size:12px;color:#a8a8a8">3</div>
<div class="t" style="left:1.500px;top:407.2px;font-size:12px;color:#a8a8a8">5</div>
<div class="t" style="left:1.500px;top:419.5px;font-size:12px;color:#a8a8a8">0</div>
<div class="a" style="left:18px;top:398.9px;width:3px;height:1px;background:#7a7a7a"></div>
<div class="a" style="left:18px;top:407.9px;width:3px;height:1px;background:#7a7a7a"></div>
<div class="a" style="left:18px;top:416.9px;width:3px;height:1px;background:#7a7a7a"></div>
<div class="a" style="left:18px;top:426.0px;width:3px;height:1px;background:#7a7a7a"></div>
<div class="a" style="left:0;top:435.0px;width:21px;height:1px;background:#7a7a7a"></div>
<div class="t" style="left:1.500px;top:440.0px;font-size:12px;color:#a8a8a8">4</div>
<div class="t" style="left:1.500px;top:452.3px;font-size:12px;color:#a8a8a8">0</div>
<div class="t" style="left:1.500px;top:464.6px;font-size:12px;color:#a8a8a8">0</div>
<div class="a" style="left:18px;top:444.0px;width:3px;height:1px;background:#7a7a7a"></div>
<div class="a" style="left:18px;top:453.1px;width:3px;height:1px;background:#7a7a7a"></div>
<div class="a" style="left:18px;top:462.1px;width:3px;height:1px;background:#7a7a7a"></div>
<div class="a" style="left:18px;top:471.1px;width:3px;height:1px;background:#7a7a7a"></div>
<div class="a" style="left:0;top:480.1px;width:21px;height:1px;background:#7a7a7a"></div>
<div class="t" style="left:1.500px;top:485.1px;font-size:12px;color:#a8a8a8">4</div>
<div class="t" style="left:1.500px;top:497.4px;font-size:12px;color:#a8a8a8">5</div>
<div class="t" style="left:1.500px;top:509.7px;font-size:12px;color:#a8a8a8">0</div>
<div class="a" style="left:18px;top:489.1px;width:3px;height:1px;background:#7a7a7a"></div>
<div class="a" style="left:18px;top:498.2px;width:3px;height:1px;background:#7a7a7a"></div>
<div class="a" style="left:18px;top:507.2px;width:3px;height:1px;background:#7a7a7a"></div>
<div class="a" style="left:18px;top:516.2px;width:3px;height:1px;background:#7a7a7a"></div>
<div class="a" style="left:0;top:525.2px;width:21px;height:1px;background:#7a7a7a"></div>
<div class="t" style="left:1.500px;top:530.2px;font-size:12px;color:#a8a8a8">5</div>
<div class="t" style="left:1.500px;top:542.5px;font-size:12px;color:#a8a8a8">0</div>
<div class="t" style="left:1.500px;top:554.9px;font-size:12px;color:#a8a8a8">0</div>
<div class="a" style="left:18px;top:534.3px;width:3px;height:1px;background:#7a7a7a"></div>
<div class="a" style="left:18px;top:543.3px;width:3px;height:1px;background:#7a7a7a"></div>
<div class="a" style="left:18px;top:552.3px;width:3px;height:1px;background:#7a7a7a"></div>
<div class="a" style="left:18px;top:561.4px;width:3px;height:1px;background:#7a7a7a"></div>
<div class="a" style="left:0;top:570.4px;width:21px;height:1px;background:#7a7a7a"></div>
<div class="t" style="left:1.500px;top:575.4px;font-size:12px;color:#a8a8a8">5</div>
<div class="t" style="left:1.500px;top:587.7px;font-size:12px;color:#a8a8a8">5</div>
<div class="t" style="left:1.500px;top:600.0px;font-size:12px;color:#a8a8a8">0</div>
<div class="a" style="left:18px;top:579.4px;width:3px;height:1px;background:#7a7a7a"></div>
<div class="a" style="left:18px;top:588.4px;width:3px;height:1px;background:#7a7a7a"></div>
<div class="a" style="left:18px;top:597.5px;width:3px;height:1px;background:#7a7a7a"></div>
<div class="a" style="left:18px;top:606.5px;width:3px;height:1px;background:#7a7a7a"></div>
<div class="a" style="left:0;top:615.5px;width:21px;height:1px;background:#7a7a7a"></div>
<div class="t" style="left:1.500px;top:620.5px;font-size:12px;color:#a8a8a8">6</div>
<div class="t" style="left:1.500px;top:632.8px;font-size:12px;color:#a8a8a8">0</div>
<div class="t" style="left:1.500px;top:645.1px;font-size:12px;color:#a8a8a8">0</div>
<div class="a" style="left:18px;top:624.5px;width:3px;height:1px;background:#7a7a7a"></div>
<div class="a" style="left:18px;top:633.5px;width:3px;height:1px;background:#7a7a7a"></div>
<div class="a" style="left:18px;top:642.6px;width:3px;height:1px;background:#7a7a7a"></div>
<div class="a" style="left:18px;top:651.6px;width:3px;height:1px;background:#7a7a7a"></div>
<div class="a" style="left:0;top:660.6px;width:21px;height:1px;background:#7a7a7a"></div>
<div class="t" style="left:1.500px;top:665.6px;font-size:12px;color:#a8a8a8">6</div>
<div class="t" style="left:1.500px;top:677.9px;font-size:12px;color:#a8a8a8">5</div>
<div class="t" style="left:1.500px;top:690.2px;font-size:12px;color:#a8a8a8">0</div>
<div class="a" style="left:18px;top:669.6px;width:3px;height:1px;background:#7a7a7a"></div>
<div class="a" style="left:18px;top:678.7px;width:3px;height:1px;background:#7a7a7a"></div>
<div class="a" style="left:18px;top:687.7px;width:3px;height:1px;background:#7a7a7a"></div>
<div class="a" style="left:18px;top:696.7px;width:3px;height:1px;background:#7a7a7a"></div>
<div class="a" style="left:0;top:705.8px;width:21px;height:1px;background:#7a7a7a"></div>
<div class="t" style="left:1.500px;top:710.8px;font-size:12px;color:#a8a8a8">7</div>
<div class="t" style="left:1.500px;top:723.0px;font-size:12px;color:#a8a8a8">0</div>
<div class="t" style="left:1.500px;top:735.4px;font-size:12px;color:#a8a8a8">0</div>
<div class="a" style="left:18px;top:714.8px;width:3px;height:1px;background:#7a7a7a"></div>
<div class="a" style="left:18px;top:723.8px;width:3px;height:1px;background:#7a7a7a"></div>
<div class="a" style="left:18px;top:732.8px;width:3px;height:1px;background:#7a7a7a"></div>
<div class="a" style="left:18px;top:741.9px;width:3px;height:1px;background:#7a7a7a"></div>
<div class="a" style="left:0;top:750.9px;width:21px;height:1px;background:#7a7a7a"></div>
<div class="t" style="left:1.500px;top:755.9px;font-size:12px;color:#a8a8a8">7</div>
<div class="t" style="left:1.500px;top:768.2px;font-size:12px;color:#a8a8a8">5</div>
<div class="t" style="left:1.500px;top:780.5px;font-size:12px;color:#a8a8a8">0</div>
<div class="a" style="left:18px;top:759.9px;width:3px;height:1px;background:#7a7a7a"></div>
<div class="a" style="left:18px;top:768.9px;width:3px;height:1px;background:#7a7a7a"></div>
<div class="a" style="left:18px;top:778.0px;width:3px;height:1px;background:#7a7a7a"></div>
<div class="a" style="left:18px;top:787.0px;width:3px;height:1px;background:#7a7a7a"></div>
<div class="a" style="left:0;top:796.0px;width:21px;height:1px;background:#7a7a7a"></div>
<div class="t" style="left:1.500px;top:801.0px;font-size:12px;color:#a8a8a8">8</div>
<div class="t" style="left:1.500px;top:813.3px;font-size:12px;color:#a8a8a8">0</div>
<div class="t" style="left:1.500px;top:825.6px;font-size:12px;color:#a8a8a8">0</div>
<div class="a" style="left:18px;top:805.0px;width:3px;height:1px;background:#7a7a7a"></div>
<div class="a" style="left:18px;top:814.0px;width:3px;height:1px;background:#7a7a7a"></div>
<div class="a" style="left:18px;top:823.1px;width:3px;height:1px;background:#7a7a7a"></div>
<div class="a" style="left:18px;top:832.1px;width:3px;height:1px;background:#7a7a7a"></div>
<div class="a" style="left:0;top:841.1px;width:21px;height:1px;background:#7a7a7a"></div>
<div class="t" style="left:1.500px;top:846.1px;font-size:12px;color:#a8a8a8">8</div>
<div class="t" style="left:1.500px;top:858.4px;font-size:12px;color:#a8a8a8">5</div>
<div class="t" style="left:1.500px;top:870.7px;font-size:12px;color:#a8a8a8">0</div>
<div class="a" style="left:18px;top:850.1px;width:3px;height:1px;background:#7a7a7a"></div>
<div class="a" style="left:18px;top:859.2px;width:3px;height:1px;background:#7a7a7a"></div>
<div class="a" style="left:18px;top:868.2px;width:3px;height:1px;background:#7a7a7a"></div>
<div class="a" style="left:18px;top:877.2px;width:3px;height:1px;background:#7a7a7a"></div>
<div class="a" style="left:0;top:886.2px;width:21px;height:1px;background:#7a7a7a"></div>
<div class="t" style="left:1.500px;top:891.2px;font-size:12px;color:#a8a8a8">9</div>
<div class="t" style="left:1.500px;top:903.5px;font-size:12px;color:#a8a8a8">0</div>
<div class="t" style="left:1.500px;top:915.9px;font-size:12px;color:#a8a8a8">0</div>
<div class="a" style="left:18px;top:895.3px;width:3px;height:1px;background:#7a7a7a"></div>
<div class="a" style="left:18px;top:904.3px;width:3px;height:1px;background:#7a7a7a"></div>
<div class="a" style="left:18px;top:913.3px;width:3px;height:1px;background:#7a7a7a"></div>
<div class="a" style="left:18px;top:922.4px;width:3px;height:1px;background:#7a7a7a"></div>
</div>
<div class="a" style="left:71px;top:138px;width:1px;height:870px;background:#7a7a7a;"></div>
<div class="a" style="left:0px;top:82px;width:1px;height:948px;background:#3a3a3a;"></div>
<div class="a" style="left:13px;top:101px;width:1.3px;height:5px;background:#3e3e3e;"></div>
<div class="a" style="left:16px;top:101px;width:1.3px;height:5px;background:#3e3e3e;"></div>
<div class="a" style="left:19px;top:101px;width:1.3px;height:5px;background:#3e3e3e;"></div>
<div class="a" style="left:22px;top:101px;width:1.3px;height:5px;background:#3e3e3e;"></div>
<div class="a" style="left:25px;top:101px;width:1.3px;height:5px;background:#3e3e3e;"></div>
<div class="a" style="left:28px;top:101px;width:1.3px;height:5px;background:#3e3e3e;"></div>
<div class="a" style="left:31px;top:101px;width:1.3px;height:5px;background:#3e3e3e;"></div>
<div class="a" style="left:34px;top:101px;width:1.3px;height:5px;background:#3e3e3e;"></div>
<div class="a" style="left:37px;top:101px;width:1.3px;height:5px;background:#3e3e3e;"></div>
<div class="a" style="left:5px;top:637.500px;width:38.500px;height:29px;background:#383838;border-radius:3px"></div>
<svg style="left:12px;top:121.0px" width="24" height="24" viewBox="0 0 24 24"><g transform="translate(12 12) scale(0.860) translate(-12 -12)"><path d="M12 3 V21 M3 12 H21" fill="none" stroke="#d6d6d6" stroke-width="1.6" stroke-width="1.800"/><path d="M12 1 L15.500 5.500 H8.500 Z M12 23 L15.500 18.500 H8.500 Z M1 12 L5.500 8.500 V15.500 Z M23 12 L18.500 8.500 V15.500 Z" fill="#d6d6d6"/></g></svg>
<svg style="left:35.500px;top:140.2px" width="5" height="5"><path d="M4 0 V4 H0 Z" fill="#d6d6d6"/></svg>
<svg style="left:12px;top:153.5px" width="24" height="24" viewBox="0 0 24 24"><rect x="2.5" y="4.5" width="19" height="15" fill="none" stroke="#d6d6d6" stroke-width="1.6" stroke-dasharray="5 2.4"/></svg>
<svg style="left:35.500px;top:172.7px" width="5" height="5"><path d="M4 0 V4 H0 Z" fill="#d6d6d6"/></svg>
<svg style="left:12px;top:186.0px" width="24" height="24" viewBox="0 0 24 24"><ellipse cx="13" cy="10" rx="9.5" ry="7" transform="rotate(-12 13 10)" fill="none" stroke="#d6d6d6" stroke-width="1.6"/><circle cx="5.5" cy="15.5" r="2" fill="none" stroke="#d6d6d6" stroke-width="1.6" stroke-width="1.3"/><path d="M6.5 17 Q9 19 7 22" fill="none" stroke="#d6d6d6" stroke-width="1.6" stroke-width="1.3"/></svg>
<svg style="left:35.500px;top:205.2px" width="5" height="5"><path d="M4 0 V4 H0 Z" fill="#d6d6d6"/></svg>
<svg style="left:12px;top:218.5px" width="24" height="24" viewBox="0 0 24 24"><ellipse cx="7" cy="13" rx="5.300" ry="7.300" fill="none" stroke="#d6d6d6" stroke-width="1.400" stroke-dasharray="1.500 1.500"/><path d="M22.500 3.500 L21 2.500 L14.500 11.500 L16.500 13 Z" fill="#d6d6d6"/><path d="M14 12 Q11 11.500 10 14.500 Q9.500 17 8.500 18.500 Q13 19.500 15.500 17 Q17.500 15 16.800 13.800 Z" fill="#d6d6d6"/></svg>
<svg style="left:35.500px;top:237.7px" width="5" height="5"><path d="M4 0 V4 H0 Z" fill="#d6d6d6"/></svg>
<svg style="left:12px;top:251.0px" width="24" height="24" viewBox="0 0 24 24"><path d="M6 0.500 V16.600 H19.500 M21.500 16.600 H23.500 M0.500 5.800 H3.500 M6 5.800 H18 V22" fill="none" stroke="#d6d6d6" stroke-width="1.6" stroke-width="2.200"/></svg>
<svg style="left:35.500px;top:270.2px" width="5" height="5"><path d="M4 0 V4 H0 Z" fill="#d6d6d6"/></svg>
<svg style="left:12px;top:283.5px" width="24" height="24" viewBox="0 0 24 24"><rect x="4" y="5" width="18.500" height="14.500" fill="none" stroke="#d6d6d6" stroke-width="1.6" stroke-width="1.500"/><path d="M4 5 L22.500 19.500 M22.500 5 L4 19.500" fill="none" stroke="#d6d6d6" stroke-width="1.6" stroke-width="1.300"/><g fill="#d6d6d6"><rect x="2.500" y="3.500" width="3" height="3"/><rect x="21" y="3.500" width="3" height="3"/><rect x="2.500" y="18" width="3" height="3"/><rect x="21" y="18" width="3" height="3"/></g></svg>
<svg style="left:12px;top:316.0px" width="24" height="24" viewBox="0 0 24 24"><g transform="rotate(45 12 10.500)"><rect x="9.400" y="-2" width="5.200" height="8.500" rx="2.600" fill="#d6d6d6"/><rect x="7.300" y="5.800" width="9.400" height="3" fill="#d6d6d6"/><rect x="10.200" y="8.500" width="3.600" height="2.500" fill="#d6d6d6"/><rect x="9.900" y="10" width="4.200" height="12.800" rx="2.100" fill="none" stroke="#d6d6d6" stroke-width="1.400"/></g></svg>
<svg style="left:35.500px;top:335.2px" width="5" height="5"><path d="M4 0 V4 H0 Z" fill="#d6d6d6"/></svg>
<svg style="left:12px;top:348.5px" width="24" height="24" viewBox="0 0 24 24"><g transform="rotate(-49 12.800 12.200)"><rect x="2.600" y="8.200" width="20.400" height="8" rx="1.600" fill="#d6d6d6"/><path d="M8.800 8.200 V16.200 M16.800 8.200 V16.200" stroke="#535353" stroke-width="1"/><g fill="#535353"><circle cx="10.800" cy="10.700" r="0.750"/><circle cx="12.800" cy="10.700" r="0.750"/><circle cx="14.800" cy="10.700" r="0.750"/><circle cx="10.800" cy="13.700" r="0.750"/><circle cx="12.800" cy="13.700" r="0.750"/><circle cx="14.800" cy="13.700" r="0.750"/></g></g><path d="M4.500 12 A4.600 4.600 0 1 1 11 6" fill="none" stroke="#d6d6d6" stroke-width="1.100" stroke-dasharray="1.200 1.300"/></svg>
<svg style="left:35.500px;top:367.7px" width="5" height="5"><path d="M4 0 V4 H0 Z" fill="#d6d6d6"/></svg>
<svg style="left:12px;top:381.0px" width="24" height="24" viewBox="0 0 24 24"><path d="M22.500 1.500 Q20 2 11.500 12.500 L14 15 Q21 8 22.500 1.500 Z" fill="#d6d6d6"/><path d="M10.500 13.500 Q7.500 13 6 16 Q5 19 2 20.500 Q7 22.500 10.500 20 Q13.500 17.500 13 16 Z" fill="#d6d6d6"/></svg>
<svg style="left:35.500px;top:400.2px" width="5" height="5"><path d="M4 0 V4 H0 Z" fill="#d6d6d6"/></svg>
<svg style="left:12px;top:413.5px" width="24" height="24" viewBox="0 0 24 24"><circle cx="12" cy="6.700" r="4.100" fill="#d6d6d6"/><path d="M10 9 Q10.800 12 9.500 14.300 H14.500 Q13.200 12 14 9 Z" fill="#d6d6d6"/><path d="M3.900 19.400 V16 Q3.900 14.300 5.600 14.300 H18.500 Q20.200 14.300 20.200 16 V19.400 Z" fill="#d6d6d6"/><rect x="4" y="20.900" width="16.200" height="1.300" fill="#d6d6d6"/></svg>
<svg style="left:35.500px;top:432.7px" width="5" height="5"><path d="M4 0 V4 H0 Z" fill="#d6d6d6"/></svg>
<svg style="left:12px;top:446.0px" width="24" height="24" viewBox="0 0 24 24"><path d="M22 2.500 Q19.500 3.500 13.800 13 L16 15 Q21 8 22 2.500 Z" fill="#d6d6d6"/><path d="M12.800 13.800 Q10 13 8.500 15.800 Q7.500 19 4 20.800 Q8.500 22.500 12.300 20.300 Q15.300 18 15 16 Z" fill="#d6d6d6"/><path d="M5 8 Q9.500 3.500 14.500 6.500" fill="none" stroke="#d6d6d6" stroke-width="1.6" stroke-width="1.400"/><path d="M0 9.800 L4.500 4.800 L7.300 10 Z" fill="#d6d6d6"/><path d="M19.800 11 Q21 15.500 15.300 18.500" fill="none" stroke="#d6d6d6" stroke-width="1.200" stroke-dasharray="1.500 1.500"/></svg>
<svg style="left:35.500px;top:465.2px" width="5" height="5"><path d="M4 0 V4 H0 Z" fill="#d6d6d6"/></svg>
<svg style="left:12px;top:478.5px" width="24" height="24" viewBox="0 0 24 24"><path d="M15.300 4 L21.100 9.900 L14 16.600 L8.600 11.200 Z" fill="#d6d6d6"/><path d="M8.600 11.200 L2.700 16.900 L6.200 20.400 H9.800 L14 16.600" fill="none" stroke="#d6d6d6" stroke-width="1.6" stroke-width="1.400"/><path d="M6 20.500 H21.600" fill="none" stroke="#d6d6d6" stroke-width="1.6" stroke-width="1.400"/></svg>
<svg style="left:35.500px;top:497.7px" width="5" height="5"><path d="M4 0 V4 H0 Z" fill="#d6d6d6"/></svg>
<svg style="left:12px;top:509.500px" width="24" height="24"><defs><linearGradient id="gt" x1="0" x2="1"><stop offset="0" stop-color="#4a4a4a"/><stop offset="1" stop-color="#e0e0e0"/></linearGradient></defs><rect x="2.5" y="4.500" width="19" height="15" fill="url(#gt)" stroke="#d6d6d6" stroke-width="1.5"/></svg>
<svg style="left:35.500px;top:529.5px" width="5" height="5"><path d="M4 0 V4 H0 Z" fill="#d6d6d6"/></svg>
<svg style="left:12px;top:543.5px" width="24" height="24" viewBox="0 0 24 24"><path d="M12 2.500 Q18.500 11 18.500 15 A6.500 6.500 0 0 1 5.500 15 Q5.500 11 12 2.500 Z" fill="#d6d6d6"/></svg>
<svg style="left:35.500px;top:562.7px" width="5" height="5"><path d="M4 0 V4 H0 Z" fill="#d6d6d6"/></svg>
<svg style="left:12px;top:576.0px" width="24" height="24" viewBox="0 0 24 24"><circle cx="14.500" cy="8.500" r="6.500" fill="#d6d6d6"/><path d="M10.500 13 L3 20.500" stroke="#d6d6d6" stroke-width="2.200"/></svg>
<svg style="left:35.500px;top:595.2px" width="5" height="5"><path d="M4 0 V4 H0 Z" fill="#d6d6d6"/></svg>
<svg style="left:12px;top:608.5px" width="24" height="24" viewBox="0 0 24 24"><g transform="translate(-0.400 1.500) rotate(45 12 12)"><rect x="8" y="1.300" width="8" height="3.600" rx="0.800" fill="#d6d6d6"/><path d="M8.800 6 L6.300 14.500 L12 22.500 L17.700 14.500 L15.200 6 Z" fill="none" stroke="#d6d6d6" stroke-width="1.6" stroke-width="1.400" stroke-linejoin="round"/><path d="M12 22 V14" fill="none" stroke="#d6d6d6" stroke-width="1.6" stroke-width="1.200"/><circle cx="12" cy="12.800" r="1.700" fill="#d6d6d6"/></g></svg>
<svg style="left:35.500px;top:627.7px" width="5" height="5"><path d="M4 0 V4 H0 Z" fill="#d6d6d6"/></svg>
<svg style="left:16px;top:644px" width="17.5" height="17" viewBox="0 0 17 17" preserveAspectRatio="none"><path d="M0 0 H17 V5 H15.400 V2.200 H9.800 V14.800 Q9.800 15.500 12.800 15.600 V17 H4.200 V15.600 Q7.200 15.500 7.200 14.800 V2.200 H1.600 V5 H0 Z" fill="#e8e8e8" stroke="#e8e8e8" stroke-width="0"/></svg>
<svg style="left:36px;top:660.5px" width="5" height="5"><path d="M4 0 V4 H0 Z" fill="#d6d6d6"/></svg>
<svg style="left:12px;top:673.5px" width="24" height="24" viewBox="0 0 24 24"><path d="M6.500 2.500 V18.500 L10.500 15 L13.300 21.500 L15.800 20.400 L13 14 H18.500 Z" fill="#141414" stroke="#d6d6d6" stroke-width="1.500" stroke-linejoin="miter"/></svg>
<svg style="left:35.500px;top:692.7px" width="5" height="5"><path d="M4 0 V4 H0 Z" fill="#d6d6d6"/></svg>
<svg style="left:12px;top:706.0px" width="24" height="24" viewBox="0 0 24 24"><rect x="3" y="3.800" width="18.500" height="14.500" fill="#6c6c6c" stroke="#d6d6d6" stroke-width="1.500"/></svg>
<svg style="left:35.500px;top:725.2px" width="5" height="5"><path d="M4 0 V4 H0 Z" fill="#d6d6d6"/></svg>
<svg style="left:12px;top:738.5px" width="24" height="24" viewBox="0 0 24 24"><path d="M8.600 13 V4.500 Q8.600 3.300 9.800 3.300 Q11 3.300 11 4.500 V11 H11.600 V3.500 Q11.600 2.300 12.800 2.300 Q14 2.300 14 3.500 V11 H14.600 V4.500 Q14.600 3.300 15.800 3.300 Q17 3.300 17 4.500 V11.500 H17.800 V8.200 Q17.800 7 19 7 Q20.200 7 20.200 8.200 V15 Q20.200 21.500 14.500 21.500 Q10.500 21.500 8.200 18 L3 12 Q2.300 10.800 3.500 10.300 Q4.600 10 5.500 11 L8.600 14.500 Z" fill="#d6d6d6"/></svg>
<svg style="left:35.500px;top:757.7px" width="5" height="5"><path d="M4 0 V4 H0 Z" fill="#d6d6d6"/></svg>
<svg style="left:12px;top:771.0px" width="24" height="24" viewBox="0 0 24 24"><circle cx="9.800" cy="9.500" r="7" fill="none" stroke="#d6d6d6" stroke-width="1.6" stroke-width="1.700"/><path d="M9.500 5.300 A4.300 4.300 0 0 1 13.800 9" fill="none" stroke="#d6d6d6" stroke-width="1.6" stroke-width="1.100"/><path d="M15 14.800 L21.500 21.300" stroke="#d6d6d6" stroke-width="2.400"/></svg>
<svg style="left:12px;top:803.5px" width="24" height="24" viewBox="0 0 24 24"><circle cx="5" cy="12" r="1.900" fill="#d6d6d6"/><circle cx="12" cy="12" r="1.900" fill="#d6d6d6"/><circle cx="19" cy="12" r="1.900" fill="#d6d6d6"/></svg>
<svg style="left:35.500px;top:822.7px" width="5" height="5"><path d="M4 0 V4 H0 Z" fill="#d6d6d6"/></svg>
<svg style="left:5px;top:838px" width="14" height="14"><rect x="4.800" y="5" width="8" height="8" fill="#e6e6e6"/><rect x="0.500" y="0.500" width="8.500" height="8.500" fill="#535353"/><rect x="1" y="1" width="7.200" height="7.200" fill="#111"/></svg>
<svg style="left:26px;top:837px" width="16" height="16"><path d="M4 6 H10 V12" fill="none" stroke="#d6d6d6" stroke-width="1.600"/><path d="M1 6 L5 2.500 V9.500 Z M10 15.500 L6.500 11.500 H13.500 Z" fill="#d6d6d6"/></svg>
<div class="a" style="left:18px;top:871px;width:22px;height:22px;background:#0000ff;border:1px solid #fff;outline:1px solid #2a2a2a"></div>
<div class="a" style="left:6px;top:859px;width:22px;height:22px;background:#ff0000;border:1px solid #fff;outline:1px solid #2a2a2a"></div>
<svg style="left:12px;top:906px" width="24" height="24"><rect x="1.800" y="4" width="20.500" height="15.500" fill="none" stroke="#d6d6d6" stroke-width="1.6" stroke-width="1.600"/><circle cx="12" cy="11.800" r="4.500" fill="none" stroke="#d6d6d6" stroke-width="1.200" stroke-dasharray="1.400 1.300"/></svg>
<svg style="left:12px;top:938px" width="24" height="24"><rect x="1.800" y="7.500" width="14.500" height="12" fill="none" stroke="#d6d6d6" stroke-width="1.6" stroke-width="1.600"/><rect x="8.800" y="4.500" width="14" height="11" fill="#535353" stroke="#d6d6d6" stroke-width="1.600"/></svg>
<svg style="left:35px;top:958px" width="5" height="5"><path d="M4 0 V4 H0 Z" fill="#d6d6d6"/></svg>
<div class="a" style="left:366px;top:212px;width:722px;height:636px;overflow:hidden"><div class="a" style="left:0;top:0;width:722px;height:722px;background:radial-gradient(circle 510.5px at 50% 50.35%, #ff0000 0%, #ff00ff 15%, #0000ff 33%, #00ffff 49%, #00ff00 67%, #ffff00 84%, #ff0000 100%)"></div></div>
<div class="t" style="left:660px;top:489px;width:135px;text-align:center;font-size:173px;color:#fff;font-family:'DejaVu Serif',serif;font-weight:bold;transform:scaleX(0.912)">4</div>
<div class="a" style="left:51px;top:1009px;width:1332px;height:20px;background:#484848;"></div>
<div class="a" style="left:51px;top:1008px;width:1352px;height:1px;background:#3a3a3a;"></div>
<div class="a" style="left:110px;top:1010px;width:1px;height:19px;background:#3a3a3a;"></div>
<div class="a" style="left:340px;top:1010px;width:1px;height:19px;background:#3a3a3a;"></div>
<div class="t" style="left:58px;top:1011px;font-size:13px;color:#e0e0e0;">90.16%</div>
<div class="t" style="left:161px;top:1010px;font-size:14px;color:#d0d0d0;">文档:1.83M/29.2M</div>
<svg style="left:327px;top:1013px" width="8" height="13"><path d="M1.500 1 L5.500 6.500 L1.500 12" fill="none" stroke="#d0d0d0" stroke-width="1.2"/></svg>
<div class="a" style="left:0px;top:1029px;width:1920px;height:1px;background:#2a2a2a;"></div>
<div class="a" style="left:1395px;top:850px;width:8px;height:158px;background:#484848;"></div>
<div class="a" style="left:84px;top:847px;width:1311px;height:163px;background:#4d4d4d;border:1px solid #383838;border-radius:5px 5px 0 0;overflow:hidden">
<div class="a" style="left:0px;top:0px;width:1310px;height:15px;background:#424242;"></div>
<div class="a" style="left:0px;top:15px;width:1310px;height:1px;background:#333;"></div>
<div class="a" style="left:0px;top:16px;width:1310px;height:36px;background:#424242;"></div>
<div class="a" style="left:0px;top:16px;width:69px;height:37px;background:#535353;"></div>
<div class="a" style="left:69px;top:16px;width:1px;height:36px;background:#383838;"></div>
<div class="a" style="left:69px;top:51px;width:1241px;height:1px;background:#3d3d3d;"></div>
<div class="t" style="left:12px;top:26px;font-size:14px;color:#f0f0f0;letter-spacing:0.700px">时间轴</div>
<div class="a" style="left:0.0px;top:53px;width:55.5px;height:74px;background:#535353;"></div>
<div class="a" style="left:55.5px;top:52px;width:1.9px;height:76px;background:#3d3d3d;"></div>
<div class="a" style="left:7.8px;top:62px;width:40px;height:40px;background:radial-gradient(circle 28.3px at 50% 50%, #ff0000 0%, #ff00ff 15%, #0000ff 33%, #00ffff 49%, #00ff00 67%, #ffff00 84%, #ff0000 100%)"></div>
<div class="t" style="left:25.299999999999997px;top:77px;font-size:10px;color:#fff;font-family:'Liberation Serif',serif;font-weight:bold">9</div>
<div class="a" style="left:6.299999999999997px;top:58.5px;width:17px;height:16.5px;background:#545454;border-top:1px solid #6c6c6c;border-left:1px solid #6c6c6c"></div>
<div class="t" style="left:11.299999999999997px;top:61px;font-size:13px;color:#fff;">1</div>
<div class="t" style="left:12.5px;top:110px;font-size:14px;color:#f0f0f0;">5 秒</div>
<svg style="left:43.0px;top:113px" width="9" height="6"><path d="M1 1 L4.500 4.500 L8 1" fill="none" stroke="#c8c8c8" stroke-width="1.2"/></svg>
<div class="a" style="left:57.5px;top:53px;width:55.5px;height:74px;background:#535353;"></div>
<div class="a" style="left:113.0px;top:52px;width:1.9px;height:76px;background:#3d3d3d;"></div>
<div class="a" style="left:65.3px;top:62px;width:40px;height:40px;background:radial-gradient(circle 28.3px at 50% 50%, #ff0000 0%, #ff00ff 15%, #0000ff 33%, #00ffff 49%, #00ff00 67%, #ffff00 84%, #ff0000 100%)"></div>
<div class="t" style="left:82.80000000000001px;top:77px;font-size:10px;color:#fff;font-family:'Liberation Serif',serif;font-weight:bold">8</div>
<div class="a" style="left:63.80000000000001px;top:58.5px;width:17px;height:16.5px;background:#545454;border-top:1px solid #6c6c6c;border-left:1px solid #6c6c6c"></div>
<div class="t" style="left:68.80000000000001px;top:61px;font-size:13px;color:#fff;">2</div>
<div class="t" style="left:70.0px;top:110px;font-size:14px;color:#f0f0f0;">5 秒</div>
<svg style="left:100.5px;top:113px" width="9" height="6"><path d="M1 1 L4.500 4.500 L8 1" fill="none" stroke="#c8c8c8" stroke-width="1.2"/></svg>
<div class="a" style="left:115.0px;top:53px;width:55.5px;height:74px;background:#535353;"></div>
<div class="a" style="left:170.5px;top:52px;width:1.9px;height:76px;background:#3d3d3d;"></div>
<div class="a" style="left:122.8px;top:62px;width:40px;height:40px;background:radial-gradient(circle 28.3px at 50% 50%, #ff0000 0%, #ff00ff 15%, #0000ff 33%, #00ffff 49%, #00ff00 67%, #ffff00 84%, #ff0000 100%)"></div>
<div class="t" style="left:140.3px;top:77px;font-size:10px;color:#fff;font-family:'Liberation Serif',serif;font-weight:bold">8</div>
<div class="a" style="left:121.30000000000001px;top:58.5px;width:17px;height:16.5px;background:#545454;border-top:1px solid #6c6c6c;border-left:1px solid #6c6c6c"></div>
<div class="t" style="left:126.30000000000001px;top:61px;font-size:13px;color:#fff;">3</div>
<div class="t" style="left:127.5px;top:110px;font-size:14px;color:#f0f0f0;">5 秒</div>
<svg style="left:158.0px;top:113px" width="9" height="6"><path d="M1 1 L4.500 4.500 L8 1" fill="none" stroke="#c8c8c8" stroke-width="1.2"/></svg>
<div class="a" style="left:172.5px;top:53px;width:55.5px;height:74px;background:#535353;"></div>
<div class="a" style="left:228.0px;top:52px;width:1.9px;height:76px;background:#3d3d3d;"></div>
<div class="a" style="left:180.3px;top:62px;width:40px;height:40px;background:radial-gradient(circle 28.3px at 50% 50%, #ff0000 0%, #ff00ff 15%, #0000ff 33%, #00ffff 49%, #00ff00 67%, #ffff00 84%, #ff0000 100%)"></div>
<div class="t" style="left:197.8px;top:77px;font-size:10px;color:#fff;font-family:'Liberation Serif',serif;font-weight:bold">6</div>
<div class="a" style="left:178.8px;top:58.5px;width:17px;height:16.5px;background:#545454;border-top:1px solid #6c6c6c;border-left:1px solid #6c6c6c"></div>
<div class="t" style="left:183.8px;top:61px;font-size:13px;color:#fff;">4</div>
<div class="t" style="left:185.0px;top:110px;font-size:14px;color:#f0f0f0;">5 秒</div>
<svg style="left:215.5px;top:113px" width="9" height="6"><path d="M1 1 L4.500 4.500 L8 1" fill="none" stroke="#c8c8c8" stroke-width="1.2"/></svg>
<div class="a" style="left:230.0px;top:53px;width:55.5px;height:74px;background:#535353;"></div>
<div class="a" style="left:285.5px;top:52px;width:1.9px;height:76px;background:#3d3d3d;"></div>
<div class="a" style="left:237.8px;top:62px;width:40px;height:40px;background:radial-gradient(circle 28.3px at 50% 50%, #ff0000 0%, #ff00ff 15%, #0000ff 33%, #00ffff 49%, #00ff00 67%, #ffff00 84%, #ff0000 100%)"></div>
<div class="t" style="left:255.3px;top:77px;font-size:10px;color:#fff;font-family:'Liberation Serif',serif;font-weight:bold">5</div>
<div class="a" style="left:236.3px;top:58.5px;width:17px;height:16.5px;background:#545454;border-top:1px solid #6c6c6c;border-left:1px solid #6c6c6c"></div>
<div class="t" style="left:241.3px;top:61px;font-size:13px;color:#fff;">5</div>
<div class="t" style="left:242.5px;top:110px;font-size:14px;color:#f0f0f0;">5 秒</div>
<svg style="left:273.0px;top:113px" width="9" height="6"><path d="M1 1 L4.500 4.500 L8 1" fill="none" stroke="#c8c8c8" stroke-width="1.2"/></svg>
<div class="a" style="left:287.5px;top:53px;width:55.5px;height:74px;background:#535353;"></div>
<div class="a" style="left:343.0px;top:52px;width:1.9px;height:76px;background:#3d3d3d;"></div>
<div class="a" style="left:295.3px;top:62px;width:40px;height:40px;background:radial-gradient(circle 28.3px at 50% 50%, #ff0000 0%, #ff00ff 15%, #0000ff 33%, #00ffff 49%, #00ff00 67%, #ffff00 84%, #ff0000 100%)"></div>
<div class="t" style="left:312.8px;top:77px;font-size:10px;color:#fff;font-family:'Liberation Serif',serif;font-weight:bold">5</div>
<div class="a" style="left:293.8px;top:58.5px;width:17px;height:16.5px;background:#545454;border-top:1px solid #6c6c6c;border-left:1px solid #6c6c6c"></div>
<div class="t" style="left:298.8px;top:61px;font-size:13px;color:#fff;">6</div>
<div class="t" style="left:300.0px;top:110px;font-size:14px;color:#f0f0f0;">5 秒</div>
<svg style="left:330.5px;top:113px" width="9" height="6"><path d="M1 1 L4.500 4.500 L8 1" fill="none" stroke="#c8c8c8" stroke-width="1.2"/></svg>
<div class="a" style="left:345.0px;top:53px;width:55.5px;height:74px;background:#6a6a6a;"></div>
<div class="a" style="left:400.5px;top:52px;width:1.9px;height:76px;background:#3d3d3d;"></div>
<div class="a" style="left:352.8px;top:62px;width:40px;height:40px;background:radial-gradient(circle 28.3px at 50% 50%, #ff0000 0%, #ff00ff 15%, #0000ff 33%, #00ffff 49%, #00ff00 67%, #ffff00 84%, #ff0000 100%)"></div>
<div class="t" style="left:370.3px;top:77px;font-size:10px;color:#fff;font-family:'Liberation Serif',serif;font-weight:bold">4</div>
<div class="a" style="left:348.5px;top:56px;width:48.800px;height:50.500px;border:1px solid #f0f0f0"></div>
<div class="a" style="left:351.3px;top:58.5px;width:17px;height:16.5px;background:#545454;border-top:1px solid #6c6c6c;border-left:1px solid #6c6c6c"></div>
<div class="t" style="left:356.3px;top:61px;font-size:13px;color:#fff;font-weight:bold">7</div>
<div class="t" style="left:357.5px;top:110px;font-size:14px;color:#f0f0f0;">5 秒</div>
<svg style="left:388.0px;top:113px" width="9" height="6"><path d="M1 1 L4.500 4.500 L8 1" fill="none" stroke="#c8c8c8" stroke-width="1.2"/></svg>
<div class="a" style="left:402.5px;top:53px;width:55.5px;height:74px;background:#535353;"></div>
<div class="a" style="left:458.0px;top:52px;width:1.9px;height:76px;background:#3d3d3d;"></div>
<div class="a" style="left:410.3px;top:62px;width:40px;height:40px;background:radial-gradient(circle 28.3px at 50% 50%, #ff0000 0%, #ff00ff 15%, #0000ff 33%, #00ffff 49%, #00ff00 67%, #ffff00 84%, #ff0000 100%)"></div>
<div class="t" style="left:427.79999999999995px;top:77px;font-size:10px;color:#fff;font-family:'Liberation Serif',serif;font-weight:bold">9</div>
<div class="a" style="left:408.8px;top:58.5px;width:17px;height:16.5px;background:#545454;border-top:1px solid #6c6c6c;border-left:1px solid #6c6c6c"></div>
<div class="t" style="left:413.8px;top:61px;font-size:13px;color:#fff;">8</div>
<div class="t" style="left:415.0px;top:110px;font-size:14px;color:#f0f0f0;">5 秒</div>
<svg style="left:445.5px;top:113px" width="9" height="6"><path d="M1 1 L4.500 4.500 L8 1" fill="none" stroke="#c8c8c8" stroke-width="1.2"/></svg>
<div class="a" style="left:460.0px;top:53px;width:55.5px;height:74px;background:#535353;"></div>
<div class="a" style="left:515.5px;top:52px;width:1.9px;height:76px;background:#3d3d3d;"></div>
<div class="a" style="left:467.8px;top:62px;width:40px;height:40px;background:radial-gradient(circle 28.3px at 50% 50%, #ff0000 0%, #ff00ff 15%, #0000ff 33%, #00ffff 49%, #00ff00 67%, #ffff00 84%, #ff0000 100%)"></div>
<div class="t" style="left:485.29999999999995px;top:77px;font-size:10px;color:#fff;font-family:'Liberation Serif',serif;font-weight:bold">9</div>
<div class="a" style="left:466.29999999999995px;top:58.5px;width:17px;height:16.5px;background:#545454;border-top:1px solid #6c6c6c;border-left:1px solid #6c6c6c"></div>
<div class="t" style="left:471.29999999999995px;top:61px;font-size:13px;color:#fff;">9</div>
<div class="t" style="left:472.5px;top:110px;font-size:14px;color:#f0f0f0;">5 秒</div>
<svg style="left:503.0px;top:113px" width="9" height="6"><path d="M1 1 L4.500 4.500 L8 1" fill="none" stroke="#c8c8c8" stroke-width="1.2"/></svg>
<div class="a" style="left:517.5px;top:53px;width:55.5px;height:74px;background:#535353;"></div>
<div class="a" style="left:573.0px;top:52px;width:1.9px;height:76px;background:#3d3d3d;"></div>
<div class="a" style="left:525.3px;top:62px;width:40px;height:40px;background:radial-gradient(circle 28.3px at 50% 50%, #ff0000 0%, #ff00ff 15%, #0000ff 33%, #00ffff 49%, #00ff00 67%, #ffff00 84%, #ff0000 100%)"></div>
<div class="t" style="left:542.8px;top:77px;font-size:10px;color:#fff;font-family:'Liberation Serif',serif;font-weight:bold">9</div>
<div class="a" style="left:523.8px;top:58.5px;width:17px;height:16.5px;background:#545454;border-top:1px solid #6c6c6c;border-left:1px solid #6c6c6c"></div>
<div class="t" style="left:525.3px;top:61px;font-size:13px;color:#fff;">10</div>
<div class="t" style="left:530.0px;top:110px;font-size:14px;color:#f0f0f0;">5 秒</div>
<svg style="left:560.5px;top:113px" width="9" height="6"><path d="M1 1 L4.500 4.500 L8 1" fill="none" stroke="#c8c8c8" stroke-width="1.2"/></svg>
<div class="a" style="left:575.0px;top:53px;width:55.5px;height:74px;background:#535353;"></div>
<div class="a" style="left:630.5px;top:52px;width:1.9px;height:76px;background:#3d3d3d;"></div>
<div class="a" style="left:582.8px;top:62px;width:40px;height:40px;background:radial-gradient(circle 28.3px at 50% 50%, #ff0000 0%, #ff00ff 15%, #0000ff 33%, #00ffff 49%, #00ff00 67%, #ffff00 84%, #ff0000 100%)"></div>
<div class="t" style="left:600.3px;top:77px;font-size:10px;color:#fff;font-family:'Liberation Serif',serif;font-weight:bold">9</div>
<div class="a" style="left:581.3px;top:58.5px;width:17px;height:16.5px;background:#545454;border-top:1px solid #6c6c6c;border-left:1px solid #6c6c6c"></div>
<div class="t" style="left:582.8px;top:61px;font-size:13px;color:#fff;">11</div>
<div class="t" style="left:587.5px;top:110px;font-size:14px;color:#f0f0f0;">5 秒</div>
<svg style="left:618.0px;top:113px" width="9" height="6"><path d="M1 1 L4.500 4.500 L8 1" fill="none" stroke="#c8c8c8" stroke-width="1.2"/></svg>
<div class="a" style="left:0px;top:128px;width:1310px;height:1px;background:#444;"></div>
<div class="a" style="left:0px;top:129px;width:369px;height:32px;background:#535353;"></div>
<div class="a" style="left:369px;top:129px;width:915px;height:32px;background:#4a4a4a;"></div>
<div class="a" style="left:1284px;top:129px;width:26px;height:32px;background:#555;"></div>
<div class="a" style="left:1284px;top:128px;width:26px;height:1px;background:#666;"></div>
<svg style="left:10px;top:136px" width="20" height="17"><path d="M7.300 0.800 V15.500" stroke="#d6d6d6" stroke-width="1.700"/><path d="M4.800 1 H9.800" stroke="#d6d6d6" stroke-width="1.400"/><path d="M0.600 5.500 H5.400 M0.600 9.800 H5.400 M0.600 14 H5.400 M9.300 5.500 H17 M9.300 9.800 H15 M9.300 14 H18.500" stroke="#d6d6d6" stroke-width="2.600"/></svg>
<div class="t" style="left:49px;top:136px;font-size:15px;color:#d0d0d0;">永远</div>
<svg style="left:98px;top:141px" width="10" height="8"><path d="M0.500 0.500 H9.500 L5 7 Z" fill="#d6d6d6"/></svg>
<svg style="left:125px;top:138px" width="16" height="12"><rect x="0.500" y="1.500" width="2.400" height="9" fill="#d6d6d6"/><path d="M14 1 V11 L5 6 Z" fill="#d6d6d6"/></svg>
<svg style="left:160px;top:138px" width="16" height="12"><rect x="12" y="1.500" width="2.400" height="9" fill="#d6d6d6"/><path d="M10 1 V11 L1 6 Z" fill="#d6d6d6"/></svg>
<svg style="left:199px;top:137px" width="14" height="14"><path d="M1 1 V13 L12.500 7 Z" fill="#d6d6d6"/></svg>
<svg style="left:234px;top:138px" width="16" height="12"><rect x="1" y="1.500" width="2.400" height="9" fill="#d6d6d6"/><path d="M5 1 V11 L14 6 Z" fill="#d6d6d6"/></svg>
<svg style="left:270px;top:137px" width="18" height="14"><circle cx="3" cy="3" r="1.400" fill="#707070"/><circle cx="6.500" cy="5.500" r="1.900" fill="#808080"/><circle cx="10" cy="8" r="2.300" fill="#9a9a9a"/><circle cx="14" cy="10.500" r="2.700" fill="#d0d0d0"/></svg>
<svg style="left:307px;top:137px" width="16" height="14"><path d="M1.500 1.500 H13.500 V12.500 H6.500 L1.500 8 Z" fill="none" stroke="#d6d6d6" stroke-width="1.600"/><path d="M1.500 8 H6.500 V12.500" fill="none" stroke="#d6d6d6" stroke-width="1.300"/></svg>
<svg style="left:344px;top:135px" width="14" height="17"><path d="M0.500 3.500 H13.500 M4.500 3 V1 H9.500 V3" fill="none" stroke="#d6d6d6" stroke-width="1.500"/><path d="M2 5 V16 H12 V5" fill="none" stroke="#d6d6d6" stroke-width="1.600"/><path d="M4.800 6.500 V14 M7 6.500 V14 M9.200 6.500 V14" stroke="#d6d6d6" stroke-width="0.900"/></svg>
<svg style="left:1273px;top:4px" width="9" height="7"><path d="M3 0.500 L0.500 3.500 L3 6.500 Z M8 0.500 L5.500 3.500 L8 6.500 Z" fill="#d6d6d6"/></svg>
<svg style="left:1294px;top:3px" width="10" height="10"><path d="M1 1 L9 9 M9 1 L1 9" stroke="#d6d6d6" stroke-width="2"/></svg>
<div class="a" style="left:1289px;top:29.0px;width:13px;height:1.3px;background:#b0b0b0;"></div>
<div class="a" style="left:1289px;top:31.700000000000045px;width:13px;height:1.3px;background:#b0b0b0;"></div>
<div class="a" style="left:1289px;top:34.39999999999998px;width:13px;height:1.3px;background:#b0b0b0;"></div>
<div class="a" style="left:1289px;top:37.10000000000002px;width:13px;height:1.3px;background:#b0b0b0;"></div>
</div>
<svg style="left:470px;top:955px" width="130" height="70"><path d="M122 62 L25 16.700" stroke="#ee1c1c" stroke-width="2.600"/><path d="M10.500 10 L28 11.500 L22.800 22.400 Z" fill="#ee1c1c"/></svg>
<div class="a" style="left:1418.0px;top:100px;width:1.2px;height:5px;background:#434343;"></div>
<div class="a" style="left:1421.2px;top:100px;width:1.2px;height:5px;background:#434343;"></div>
<div class="a" style="left:1424.4px;top:100px;width:1.2px;height:5px;background:#434343;"></div>
<div class="a" style="left:1427.6px;top:100px;width:1.2px;height:5px;background:#434343;"></div>
<div class="a" style="left:1430.8px;top:100px;width:1.2px;height:5px;background:#434343;"></div>
<div class="a" style="left:1434.0px;top:100px;width:1.2px;height:5px;background:#434343;"></div>
<div class="a" style="left:1437.2px;top:100px;width:1.2px;height:5px;background:#434343;"></div>
<div class="a" style="left:1440.4px;top:100px;width:1.2px;height:5px;background:#434343;"></div>
<div class="a" style="left:1418.0px;top:151px;width:1.2px;height:5px;background:#434343;"></div>
<div class="a" style="left:1421.2px;top:151px;width:1.2px;height:5px;background:#434343;"></div>
<div class="a" style="left:1424.4px;top:151px;width:1.2px;height:5px;background:#434343;"></div>
<div class="a" style="left:1427.6px;top:151px;width:1.2px;height:5px;background:#434343;"></div>
<div class="a" style="left:1430.8px;top:151px;width:1.2px;height:5px;background:#434343;"></div>
<div class="a" style="left:1434.0px;top:151px;width:1.2px;height:5px;background:#434343;"></div>
<div class="a" style="left:1437.2px;top:151px;width:1.2px;height:5px;background:#434343;"></div>
<div class="a" style="left:1440.4px;top:151px;width:1.2px;height:5px;background:#434343;"></div>
<div class="a" style="left:1418.0px;top:238px;width:1.2px;height:5px;background:#434343;"></div>
<div class="a" style="left:1421.2px;top:238px;width:1.2px;height:5px;background:#434343;"></div>
<div class="a" style="left:1424.4px;top:238px;width:1.2px;height:5px;background:#434343;"></div>
<div class="a" style="left:1427.6px;top:238px;width:1.2px;height:5px;background:#434343;"></div>
<div class="a" style="left:1430.8px;top:238px;width:1.2px;height:5px;background:#434343;"></div>
<div class="a" style="left:1434.0px;top:238px;width:1.2px;height:5px;background:#434343;"></div>
<div class="a" style="left:1437.2px;top:238px;width:1.2px;height:5px;background:#434343;"></div>
<div class="a" style="left:1440.4px;top:238px;width:1.2px;height:5px;background:#434343;"></div>
<div class="a" style="left:1418.0px;top:324px;width:1.2px;height:5px;background:#434343;"></div>
<div class="a" style="left:1421.2px;top:324px;width:1.2px;height:5px;background:#434343;"></div>
<div class="a" style="left:1424.4px;top:324px;width:1.2px;height:5px;background:#434343;"></div>
<div class="a" style="left:1427.6px;top:324px;width:1.2px;height:5px;background:#434343;"></div>
<div class="a" style="left:1430.8px;top:324px;width:1.2px;height:5px;background:#434343;"></div>
<div class="a" style="left:1434.0px;top:324px;width:1.2px;height:5px;background:#434343;"></div>
<div class="a" style="left:1437.2px;top:324px;width:1.2px;height:5px;background:#434343;"></div>
<div class="a" style="left:1440.4px;top:324px;width:1.2px;height:5px;background:#434343;"></div>
<div class="a" style="left:1406px;top:146px;width:47.5px;height:1px;background:#3a3a3a;"></div>
<div class="a" style="left:1406px;top:233px;width:47.5px;height:1px;background:#3a3a3a;"></div>
<div class="a" style="left:1406px;top:319px;width:47.5px;height:1px;background:#3a3a3a;"></div>
<div class="a" style="left:1406px;top:370px;width:47.5px;height:1px;background:#3a3a3a;"></div>
<div class="a" style="left:1406px;top:95px;width:47.5px;height:1px;background:#3a3a3a;"></div>
<svg style="left:1419px;top:113px" width="24" height="24" viewBox="0 0 24 24"><rect x="3.800" y="2.800" width="4.800" height="4.800" fill="none" stroke="#d6d6d6" stroke-width="1.600" stroke-width="1.300"/><rect x="3.800" y="10.300" width="4.800" height="4.800" fill="none" stroke="#d6d6d6" stroke-width="1.600" stroke-width="1.300"/><rect x="3.200" y="17" width="6" height="6" fill="#d6d6d6"/><path d="M13.500 21.500 Q21.500 16.500 19.500 7.500 L21.800 7 L17.500 2.500 L13 8.800 L15.800 8.200 Q18.500 14.500 13.500 21.500 Z" fill="#d6d6d6"/></svg>
<svg style="left:1419px;top:166px" width="24" height="24" viewBox="0 0 24 24"><path d="M2 3.500 H4 M6 3.500 H11 M2 7.500 H4 M6 7.500 H11 M2 11.500 H4 M6 11.500 H11" stroke="#d6d6d6" stroke-width="1.600"/><path d="M23.500 6 Q20 7 14.500 14.500 L16.500 16.500 Q22 11 23.500 6 Z" fill="#d6d6d6"/><path d="M13.500 15.500 Q10.500 14.500 8.500 17.500 Q7.500 20.500 5 22 Q10 23.500 13.500 21.500 Q16.500 19 15.800 17.500 Z" fill="#d6d6d6"/></svg>
<svg style="left:1419px;top:200px" width="24" height="24" viewBox="0 0 24 24"><path d="M0.500 6.500 Q5 2 10 4 Q12.500 5.500 12 8 Q10 10.500 6 9.500 Q3 8.500 0.500 6.500 Z" fill="#d6d6d6"/><path d="M13.500 7 H24" stroke="#d6d6d6" stroke-width="2.400" stroke-linecap="round"/><path d="M3.500 16.500 H14" stroke="#d6d6d6" stroke-width="2.400" stroke-linecap="round"/><path d="M23 11 Q25.500 17 22 22.500 L15.500 17 Z" fill="#d6d6d6"/></svg>
<div class="t" style="left:1422px;top:252.5px;font-size:22px;color:#d6d6d6;">A</div>
<div class="a" style="left:1438.5px;top:252px;width:1.5px;height:23px;background:#d6d6d6;"></div>
<svg style="left:1421px;top:289px" width="20" height="22"><path d="M11.500 1 H7.800 A4.900 4.900 0 0 0 7.800 10.800 H11.500 Z" fill="#d6d6d6"/><rect x="7.500" y="1" width="9.800" height="1.600" fill="#d6d6d6"/><rect x="11.500" y="1" width="1.500" height="19" fill="#bcbcbc"/><rect x="14.600" y="1" width="2.700" height="19" fill="#d6d6d6"/></svg>
<svg style="left:1419px;top:337px" width="24" height="24" viewBox="0 0 24 24"><path d="M8 2.500 L13.500 5 V12 L8 14.500 L2.500 12 V5 Z" fill="#8c8c8c" stroke="#d6d6d6" stroke-width="1.200" stroke-linejoin="round"/><path d="M2.500 5 L8 7.500 L13.500 5 L8 2.500 Z" fill="#c4c4c4"/><path d="M2.500 5 L8 7.500 L13.500 5 M8 7.500 V14.500" fill="none" stroke="#d6d6d6" stroke-width="1.600" stroke-width="1.100"/><rect x="15.700" y="2.500" width="5.300" height="5.500" fill="#d6d6d6"/><rect x="15.700" y="10" width="5.300" height="5.500" fill="#d6d6d6"/><rect x="2" y="17.700" width="19" height="5.200" fill="#d6d6d6"/><path d="M16.300 19.300 H19.700 L18 21.400 Z" fill="#535353"/></svg>
<div class="a" style="left:1918.5px;top:95px;width:1.5px;height:935px;background:#414141;"></div>
<div class="a" style="left:1456px;top:96px;width:464px;height:34px;background:#424242;"></div>
<div class="a" style="left:1456px;top:95px;width:464px;height:1px;background:#333;"></div>
<div class="a" style="left:1456px;top:96px;width:54px;height:35px;background:#535353;"></div>
<div class="a" style="left:1510px;top:96px;width:1px;height:34px;background:#383838;"></div>
<div class="t" style="left:1468px;top:107px;font-size:14px;color:#f0f0f0;letter-spacing:0.600px">颜色</div>
<div class="a" style="left:1564px;top:96px;width:1px;height:34px;background:#383838;"></div>
<div class="t" style="left:1522px;top:107px;font-size:14px;color:#a8a8a8;letter-spacing:0.600px">色板</div>
<div class="a" style="left:1510px;top:130px;width:410px;height:1px;background:#3b3b3b;"></div>
<div class="a" style="left:1899px;top:109.0px;width:13px;height:1.3px;background:#b0b0b0;"></div>
<div class="a" style="left:1899px;top:111.7px;width:13px;height:1.3px;background:#b0b0b0;"></div>
<div class="a" style="left:1899px;top:114.4px;width:13px;height:1.3px;background:#b0b0b0;"></div>
<div class="a" style="left:1899px;top:117.1px;width:13px;height:1.3px;background:#b0b0b0;"></div>
<div class="a" style="left:1466px;top:142px;width:28px;height:28px;background:#8a8a8a"></div>
<div class="a" style="left:1481.500px;top:157.500px;width:22px;height:22px;background:#0000ff;border:1px solid #fff;outline:1px solid #222"></div>
<div class="a" style="left:1469.500px;top:145px;width:22px;height:22px;background:#ff0000;border:1px solid #fff;outline:1px solid #222"></div>
<svg style="left:1465px;top:208px" width="18" height="18"><path d="M8.500 1.500 L16 16 H1 Z" fill="#e0e0e0"/><path d="M8.500 6 V11.500 M8.500 13 V15" stroke="#535353" stroke-width="1.700"/></svg>
<div class="a" style="left:1486.500px;top:210.500px;width:15.500px;height:15.500px;background:#e31b1b;border:1px solid #f0f0f0;outline:1px solid #333"></div>
<div class="a" style="left:1512px;top:139px;width:342px;height:105px;background:linear-gradient(to bottom,rgba(0,0,0,0),#000),linear-gradient(to right,#fff,#ff0000)"></div>
<svg style="left:1512px;top:139px" width="342" height="105" viewBox="0 0 342 105"><clipPath id="cf"><rect width="342" height="105"/></clipPath><circle cx="339" cy="2" r="5.500" fill="none" stroke="#fff" stroke-width="1.200" clip-path="url(#cf)"/></svg>
<div class="a" style="left:1875px;top:139px;width:24px;height:105px;background:linear-gradient(to bottom,#ff0000 0%,#ff00ff 16.600%,#0000ff 33.300%,#00ffff 50%,#00ff00 66.600%,#ffff00 83.300%,#ff0000 100%)"></div>
<svg style="left:1863px;top:135px" width="12" height="11"><path d="M1.500 1.500 H6 L10 5.500 L6 9.500 H1.500 Z" fill="#e8e8e8" stroke="#333" stroke-width="1"/></svg>
<div class="a" style="left:1456px;top:271px;width:464px;height:3px;background:#3a3a3a;"></div>
<div class="a" style="left:1456px;top:275px;width:464px;height:34px;background:#424242;"></div>
<div class="a" style="left:1456px;top:274px;width:464px;height:1px;background:#333;"></div>
<div class="a" style="left:1456px;top:275px;width:53px;height:35px;background:#535353;"></div>
<div class="a" style="left:1509px;top:275px;width:1px;height:34px;background:#383838;"></div>
<div class="t" style="left:1468px;top:286px;font-size:14px;color:#f0f0f0;letter-spacing:0.600px">学习</div>
<div class="a" style="left:1558px;top:275px;width:1px;height:34px;background:#383838;"></div>
<div class="t" style="left:1520px;top:286px;font-size:14px;color:#a8a8a8;letter-spacing:0.600px">库</div>
<div class="a" style="left:1614px;top:275px;width:1px;height:34px;background:#383838;"></div>
<div class="t" style="left:1570px;top:286px;font-size:14px;color:#a8a8a8;letter-spacing:0.600px">调整</div>
<div class="a" style="left:1509px;top:309px;width:411px;height:1px;background:#3b3b3b;"></div>
<div class="a" style="left:1899px;top:288.0px;width:13px;height:1.3px;background:#b0b0b0;"></div>
<div class="a" style="left:1899px;top:290.7px;width:13px;height:1.3px;background:#b0b0b0;"></div>
<div class="a" style="left:1899px;top:293.4px;width:13px;height:1.3px;background:#b0b0b0;"></div>
<div class="a" style="left:1899px;top:296.1px;width:13px;height:1.3px;background:#b0b0b0;"></div>
<div class="a" style="left:1457px;top:310px;width:443px;height:276px;overflow:hidden">
<div class="t" style="letter-spacing:-0.59px;left:146.500px;top:32px;font-size:22px;color:#fff">了解 Photoshop</div>
<div class="t" style="left:0;width:443px;text-align:center;top:71px;font-size:20px;color:#fff">在应用程序内直接提供的分步指导教程。从</div>
<div class="t" style="left:0;width:443px;text-align:center;top:97px;font-size:20px;color:#fff">下面选取一个主题开始教程。</div>
<div class="a" style="left:12px;top:143px;width:420px;height:75px;background:#2e2e2e;border-radius:6px;overflow:hidden">
<svg style="left:0;top:0" width="125" height="75" viewBox="0 0 125 75"><defs><radialGradient id="rm" cx="0.35" cy="0.45" r="0.800"><stop offset="0" stop-color="#333b68"/><stop offset="0.450" stop-color="#232a4e"/><stop offset="1" stop-color="#121530"/></radialGradient><linearGradient id="dr" x1="0" x2="1"><stop offset="0" stop-color="#9aa3d2"/><stop offset="1" stop-color="#cfd4f0"/></linearGradient></defs><rect width="125" height="75" fill="url(#rm)"/><path d="M0 0 H125 V5 L113 14 H22 L0 5 Z" fill="#141938"/><g fill="#5a6798"><circle cx="27" cy="3" r="0.600"/><circle cx="45" cy="8" r="0.500"/><circle cx="74" cy="3" r="0.500"/><circle cx="90" cy="9" r="0.600"/><circle cx="104" cy="4" r="0.500"/><circle cx="36" cy="11" r="0.500"/><circle cx="82" cy="11" r="0.400"/></g><rect x="59" y="4" width="6" height="4" fill="#aebbe8"/><rect x="60.500" y="5" width="3" height="2.500" fill="#f2f6ff"/><path d="M0 5 L22 14 V58 L0 75 Z" fill="#262c52"/><path d="M125 5 L113 14 V58 L125 75 Z" fill="#15183a"/><path d="M2.500 23 L9 25 V42 L2.500 43 Z" fill="#34467a"/><path d="M11.500 27 L16.500 28 V39 L11.500 40 Z" fill="#3f5590"/><rect x="24.500" y="21.500" width="25" height="20" fill="#39426f"/><rect x="26.500" y="24" width="9" height="15.500" fill="#0a0d24"/><rect x="37.500" y="24" width="10" height="15.500" fill="#0c102a"/><path d="M39 37 L45 33 L46 35 L40 38.500 Z" fill="#8a93c0"/><rect x="55" y="18" width="17.500" height="39.500" fill="#05060f"/><path d="M60 20 L71 19 V57 L60 54.500 Z" fill="url(#dr)"/><path d="M62 24 H69 V34 H62 Z M62 38 H69 V51 H62 Z" fill="none" stroke="#8d97c8" stroke-width="0.500"/><rect x="79" y="19" width="10" height="21" fill="#2e3158"/><rect x="80.500" y="21" width="7" height="17" fill="#3b3563"/><circle cx="95" cy="21" r="4" fill="#3a4470"/><circle cx="116" cy="24" r="4.500" fill="#1e2342"/><circle cx="110.500" cy="22" r="3.500" fill="#6a6070"/><circle cx="105" cy="29" r="5.200" fill="#3e4878"/><circle cx="103.500" cy="27" r="1.800" fill="#5a669c"/><path d="M0 75 L14 58 H112 L125 75 Z" fill="#1b2040"/><path d="M56 57.500 H73 L84 70 H52 Z" fill="#4a5596" opacity="0.850"/><path d="M62 60 L80 62 L84 68 L66 67 Z" fill="#2a3058"/><rect x="27" y="47.500" width="19" height="12" fill="#262b4e"/><rect x="27" y="47.500" width="19" height="2" fill="#3c4470"/><rect x="33" y="38" width="2" height="9.500" fill="#8f9ad0"/><path d="M85 51 L100 46 L125 55 V73 L106 71 L85 59 Z" fill="#343d6c"/><path d="M86 51 L100 47 L124 56 L108 62 Z" fill="#5a66a0"/><path d="M90 51.500 L100 48.500 L118 55.500 L107 59.500 Z" fill="#7884bc" opacity="0.600"/><path d="M0 48 L12 50 V75 H0 Z" fill="#0f1228"/><path d="M40 70 L58 68 L60 72 L42 74 Z" fill="#2c3a6a" opacity="0.700"/><path d="M84 72 L100 70 L104 74 L86 75 Z" fill="#2e5a6a" opacity="0.600"/><rect width="125" height="75" fill="#080a18" opacity="0.280"/></svg>
<div class="t" style="left:143px;top:28px;font-size:20px;color:#fff">基本技能</div>
<svg style="left:386px;top:27px" width="13" height="21"><path d="M1.500 1.500 L10.500 10.500 L1.500 19.500" fill="none" stroke="#fff" stroke-width="1.600"/></svg>
</div>
<div class="a" style="left:12px;top:231px;width:420px;height:75px;background:#2e2e2e;border-radius:6px;overflow:hidden">
<svg style="left:0;top:0" width="125" height="75" viewBox="0 0 125 75"><defs><linearGradient id="fl" x1="0" x2="1"><stop offset="0" stop-color="#f5ede4"/><stop offset="0.550" stop-color="#f4ebe6"/><stop offset="0.800" stop-color="#f6dcda"/><stop offset="1" stop-color="#f3c6c6"/></linearGradient></defs><rect width="125" height="75" fill="url(#fl)"/><rect x="0" y="12" width="32" height="5" fill="#e3c9a8"/><rect x="0" y="17" width="30" height="10" fill="#ecd9c0"/><ellipse cx="8" cy="10" rx="5.500" ry="4" fill="#2a2523"/><rect x="6" y="11" width="4" height="7" fill="#2f2a28"/><circle cx="112" cy="13" r="6" fill="#f0a0a8" opacity="0.600"/><circle cx="119" cy="30" r="7" fill="#ee8e98" opacity="0.550"/><circle cx="104" cy="34" r="5" fill="#f4b4b8" opacity="0.600"/><path d="M36 45 L40 14 Q46 4 58 2 H86 Q96 6 97 16 L95 45 Z" fill="#f7f5f4"/><path d="M44 14 Q50 30 46 45 M90 12 Q86 26 90 45" stroke="#dcd8d8" stroke-width="1" fill="none"/><path d="M60 0 H80 V6 Q70 14 60 6 Z" fill="#e3b39c"/><path d="M64 6 Q70 16 76 6 L73 14 H67 Z" fill="#d9a48c"/><path d="M50 0 H63 Q62 7 56 10 Q50 9 50 0 Z M77 0 H90 Q90 8 84 10 Q78 7 77 0 Z" fill="#3a2a22"/><g><circle cx="56" cy="31" r="4" fill="#4f7a3a"/><circle cx="64" cy="25" r="3.500" fill="#5a8742"/><circle cx="83" cy="24" r="3.500" fill="#4e7a3c"/><circle cx="74" cy="21" r="2.500" fill="#5d8a45"/><circle cx="97" cy="36" r="3.500" fill="#4a7437"/><circle cx="70" cy="33" r="7" fill="#a84868"/><circle cx="61" cy="38" r="5.500" fill="#c46e8c"/><circle cx="78" cy="29" r="4.500" fill="#dba0b4"/><circle cx="68" cy="27" r="3.500" fill="#c27a94"/><circle cx="80" cy="39" r="5" fill="#8e3454"/><circle cx="92" cy="30" r="5" fill="#4b3aa0"/><circle cx="96" cy="35" r="3.500" fill="#5d4cb4"/><circle cx="88" cy="37" r="3.500" fill="#5f8a48"/><circle cx="72" cy="42" r="4" fill="#6a9450"/><circle cx="86" cy="44" r="5" fill="#e9a436"/><circle cx="93" cy="43" r="3.500" fill="#f0b848"/><circle cx="55" cy="43" r="3.500" fill="#b45878"/></g><circle cx="9" cy="42" r="3" fill="#dfa044"/><circle cx="16" cy="40" r="2.500" fill="#9a5878"/><circle cx="22" cy="38" r="3" fill="#5d8a45"/><circle cx="4" cy="44" r="2.500" fill="#6a9450"/><circle cx="13" cy="45" r="2.500" fill="#e8b050"/></svg>
<div class="t" style="left:143px;top:27px;font-size:20px;color:#fff">修复照片</div>
<svg style="left:386px;top:27px" width="13" height="21"><path d="M1.500 1.500 L10.500 10.500 L1.500 19.500" fill="none" stroke="#fff" stroke-width="1.600"/></svg>
</div>
</div>
<div class="a" style="left:1900px;top:310px;width:20px;height:276px;background:#4e4e4e;"></div>
<div class="a" style="left:1902px;top:331px;width:15px;height:131px;background:#6a6a6a;"></div>
<svg style="left:1905px;top:320px" width="10" height="6"><path d="M1 5 L5 1 L9 5" fill="none" stroke="#9a9a9a" stroke-width="1.200"/></svg>
<svg style="left:1905px;top:570px" width="10" height="6"><path d="M1 1 L5 5 L9 1" fill="none" stroke="#9a9a9a" stroke-width="1.200"/></svg>
<div class="a" style="left:1906px;top:344px;width:12px;height:73px;background:#2a2a2a;border:1px solid #8a8a8a;border-radius:4px"></div>
<div class="a" style="left:1908px;top:384.0px;width:8px;height:1.6px;background:#35d24a;"></div>
<div class="a" style="left:1908px;top:386.9px;width:8px;height:1.6px;background:#35d24a;"></div>
<div class="a" style="left:1908px;top:389.8px;width:8px;height:1.6px;background:#35d24a;"></div>
<div class="a" style="left:1908px;top:392.7px;width:8px;height:1.6px;background:#35d24a;"></div>
<div class="a" style="left:1908px;top:395.6px;width:8px;height:1.6px;background:#35d24a;"></div>
<div class="a" style="left:1908px;top:398.5px;width:8px;height:1.6px;background:#35d24a;"></div>
<div class="a" style="left:1908px;top:401.4px;width:8px;height:1.6px;background:#35d24a;"></div>
<div class="a" style="left:1908px;top:404.3px;width:8px;height:1.6px;background:#35d24a;"></div>
<div class="a" style="left:1908px;top:407.2px;width:8px;height:1.6px;background:#35d24a;"></div>
<div class="a" style="left:1908px;top:410.1px;width:8px;height:1.6px;background:#35d24a;"></div>
<div class="a" style="left:1908px;top:413.0px;width:8px;height:1.6px;background:#35d24a;"></div>
<div class="a" style="left:1456px;top:586px;width:464px;height:3px;background:#3a3a3a;"></div>
<div class="a" style="left:1456px;top:590px;width:464px;height:34px;background:#424242;"></div>
<div class="a" style="left:1456px;top:589px;width:464px;height:1px;background:#333;"></div>
<div class="a" style="left:1456px;top:590px;width:55px;height:35px;background:#535353;"></div>
<div class="a" style="left:1511px;top:590px;width:1px;height:34px;background:#383838;"></div>
<div class="t" style="left:1468px;top:601px;font-size:14px;color:#f0f0f0;letter-spacing:0.600px">图层</div>
<div class="a" style="left:1567px;top:590px;width:1px;height:34px;background:#383838;"></div>
<div class="t" style="left:1523px;top:601px;font-size:14px;color:#a8a8a8;letter-spacing:0.600px">通道</div>
<div class="a" style="left:1623px;top:590px;width:1px;height:34px;background:#383838;"></div>
<div class="t" style="left:1579px;top:601px;font-size:14px;color:#a8a8a8;letter-spacing:0.600px">路径</div>
<div class="a" style="left:1511px;top:624px;width:409px;height:1px;background:#3b3b3b;"></div>
<div class="a" style="left:1899px;top:603.0px;width:13px;height:1.3px;background:#b0b0b0;"></div>
<div class="a" style="left:1899px;top:605.7px;width:13px;height:1.3px;background:#b0b0b0;"></div>
<div class="a" style="left:1899px;top:608.4px;width:13px;height:1.3px;background:#b0b0b0;"></div>
<div class="a" style="left:1899px;top:611.1px;width:13px;height:1.3px;background:#b0b0b0;"></div>
<div class="a" style="left:1461px;top:636px;width:105px;height:27px;background:#454545;border:1px solid #606060;border-radius:3px"></div>
<svg style="left:1469px;top:641px" width="15" height="15"><circle cx="6" cy="6" r="4.300" fill="none" stroke="#d6d6d6" stroke-width="1.600" stroke-width="1.700"/><path d="M9 9 L13.500 13.500" stroke="#d6d6d6" stroke-width="2.200"/></svg>
<div class="t" style="left:1489px;top:640px;font-size:15px;color:#f0f0f0;">类型</div>
<svg style="left:1552px;top:648px" width="9" height="6"><path d="M1 1 L4.5 5 L8 1" fill="none" stroke="#d0d0d0" stroke-width="1.3"/></svg>
<svg style="left:1588px;top:641px" width="17" height="15"><rect x="0.800" y="0.800" width="15" height="12.500" fill="none" stroke="#d6d6d6" stroke-width="1.600" stroke-width="1.500"/><path d="M2.500 11.500 L6.500 6 L9 9 L11 7.500 L13.500 11.500 Z" fill="#d6d6d6"/></svg>
<svg style="left:1618px;top:641px" width="15" height="15"><circle cx="7.500" cy="7.500" r="6" fill="none" stroke="#d6d6d6" stroke-width="1.600" stroke-width="1.500"/><path d="M3.300 11.700 A6 6 0 0 1 11.700 3.300 Z" fill="#d6d6d6"/></svg>
<svg style="left:1649.5px;top:641.5px" width="12" height="13" viewBox="0 0 17 17" preserveAspectRatio="none"><path d="M0 0 H17 V5 H15.400 V2.200 H9.800 V14.800 Q9.800 15.500 12.800 15.600 V17 H4.200 V15.600 Q7.200 15.500 7.200 14.800 V2.200 H1.600 V5 H0 Z" fill="#d6d6d6" stroke="#d6d6d6" stroke-width="0.9"/></svg>
<svg style="left:1678px;top:640px" width="16" height="16"><rect x="2.500" y="2.500" width="11" height="11" fill="none" stroke="#d6d6d6" stroke-width="1.600" stroke-width="1.500"/><g fill="#d6d6d6"><rect x="0.500" y="0.500" width="4" height="4"/><rect x="11.500" y="0.500" width="4" height="4"/><rect x="0.500" y="11.500" width="4" height="4"/><rect x="11.500" y="11.500" width="4" height="4"/></g><g fill="#535353"><rect x="1.700" y="1.700" width="1.600" height="1.600"/><rect x="12.700" y="1.700" width="1.600" height="1.600"/><rect x="1.700" y="12.700" width="1.600" height="1.600"/><rect x="12.700" y="12.700" width="1.600" height="1.600"/></g></svg>
<svg style="left:1709px;top:640px" width="16" height="16"><path d="M5.500 1 H10.500 L14 4.500 V13 H11" fill="none" stroke="#d6d6d6" stroke-width="1.600" stroke-width="1.500"/><path d="M10 1 V5 H14" fill="none" stroke="#d6d6d6" stroke-width="1.600" stroke-width="1.200"/><rect x="1" y="8" width="8" height="7.500" fill="#d6d6d6"/></svg>
<div class="a" style="left:1745px;top:638px;width:11px;height:22px;background:#3c3c3c;border-radius:6px"></div>
<div class="a" style="left:1745px;top:637px;width:11px;height:11px;background:#e8e8e8;border-radius:6px"></div>
<div class="a" style="left:1456px;top:665px;width:463px;height:1px;background:#3f3f3f;"></div>
<div class="a" style="left:1461px;top:673px;width:145px;height:27px;background:#454545;border:1px solid #606060;border-radius:3px"></div>
<div class="t" style="left:1470px;top:677px;font-size:15px;color:#f0f0f0;">正常</div>
<svg style="left:1594px;top:685px" width="9" height="6"><path d="M1 1 L4.5 5 L8 1" fill="none" stroke="#d0d0d0" stroke-width="1.3"/></svg>
<div class="t" style="left:1617px;top:675px;font-size:15px;color:#d8d8d8;">不透明度:</div>
<div class="a" style="left:1687px;top:673px;width:68px;height:23px;background:#454545;border:1px solid #606060;border-radius:3px"></div>
<div class="a" style="left:1735px;top:674px;width:1px;height:21px;background:#606060;"></div>
<div class="t" style="left:1691px;top:677px;font-size:13px;color:#f0f0f0;">100%</div>
<svg style="left:1741px;top:683px" width="9" height="6"><path d="M1 1 L4.5 5 L8 1" fill="none" stroke="#d0d0d0" stroke-width="1.3"/></svg>
<div class="a" style="left:1456px;top:701px;width:463px;height:1px;background:#3f3f3f;"></div>
<div class="t" style="left:1463px;top:712px;font-size:15px;color:#d8d8d8;">统一:</div>
<svg style="left:1506px;top:711px" width="16" height="16"><path d="M8.500 1 L14 6.500 L12.500 7 L10 9.500 L9.500 12.500 L3 6 L6 5.500 L8.500 3 Z" fill="#d6d6d6"/><path d="M6 9.500 L1.500 14" stroke="#d6d6d6" stroke-width="1.500"/></svg>
<svg style="left:1516px;top:722px" width="11" height="7"><rect x="0.800" y="0.800" width="5" height="4.500" rx="2.200" fill="none" stroke="#d6d6d6" stroke-width="1.600" stroke-width="1.100"/><rect x="5" y="0.800" width="5" height="4.500" rx="2.200" fill="none" stroke="#d6d6d6" stroke-width="1.600" stroke-width="1.100"/></svg>
<svg style="left:1533px;top:711px" width="18" height="14"><path d="M1 6.500 Q8 -1.500 15.500 6.500 Q8 14 1 6.500 Z" fill="none" stroke="#d6d6d6" stroke-width="1.600" stroke-width="1.500"/><circle cx="8.200" cy="6.300" r="2.600" fill="#d6d6d6"/></svg>
<svg style="left:1543px;top:722px" width="11" height="7"><rect x="0.800" y="0.800" width="5" height="4.500" rx="2.200" fill="none" stroke="#d6d6d6" stroke-width="1.600" stroke-width="1.100"/><rect x="5" y="0.800" width="5" height="4.500" rx="2.200" fill="none" stroke="#d6d6d6" stroke-width="1.600" stroke-width="1.100"/></svg>
<div class="t" style="left:1561px;top:709px;font-size:17px;color:#d6d6d6;font-style:italic;font-family:'Liberation Sans',sans-serif">fx</div>
<svg style="left:1571px;top:722px" width="11" height="7"><rect x="0.800" y="0.800" width="5" height="4.500" rx="2.200" fill="none" stroke="#d6d6d6" stroke-width="1.600" stroke-width="1.100"/><rect x="5" y="0.800" width="5" height="4.500" rx="2.200" fill="none" stroke="#d6d6d6" stroke-width="1.600" stroke-width="1.100"/></svg>
<div class="a" style="left:1667px;top:713px;width:14px;height:14px;background:#f4f4f4;border-radius:2px"></div>
<svg style="left:1667px;top:713px" width="14" height="14"><path d="M3 7 L6 10.500 L11 3.500" fill="none" stroke="#222" stroke-width="2.100"/></svg>
<div class="t" style="left:1690px;top:712px;font-size:15px;color:#f0f0f0;letter-spacing:0.500px">传播帧 1</div>
<div class="a" style="left:1456px;top:737px;width:463px;height:1px;background:#3f3f3f;"></div>
<div class="t" style="left:1463px;top:748px;font-size:15px;color:#d8d8d8;">锁定:</div>
<svg style="left:1511px;top:749px" width="15" height="15"><rect x="0.500" y="0.500" width="14" height="14" fill="#6a6a6a"/><g fill="#9a9a9a"><rect x="1.500" y="1.500" width="4" height="4"/><rect x="9.500" y="1.500" width="4" height="4"/><rect x="5.500" y="5.500" width="4" height="4"/><rect x="1.500" y="9.500" width="4" height="4"/><rect x="9.500" y="9.500" width="4" height="4"/></g></svg>
<svg style="left:1538px;top:747px" width="18" height="18"><path d="M17 1 Q14 2 8 9.500 L10 11.500 Q15.500 6 17 1 Z" fill="#9a9a9a"/><path d="M7 10.500 Q4.500 10 3.500 12.500 Q3 15 1 16.500 Q5 17.500 7.500 15.500 Q9.500 13.500 9 12.500 Z" fill="#9a9a9a"/></svg>
<svg style="left:1564px;top:748px" width="17" height="17"><path d="M8.500 2 V15 M2 8.500 H15" fill="none" stroke="#d6d6d6" stroke-width="1.600" stroke-width="1.400"/><path d="M8.500 0.500 L11 3.800 H6 Z M8.500 16.500 L11 13.200 H6 Z M0.500 8.500 L3.800 6 V11 Z M16.500 8.500 L13.200 6 V11 Z" fill="#d6d6d6"/></svg>
<svg style="left:1592px;top:748px" width="18" height="17"><rect x="3.500" y="4" width="11" height="9.500" fill="none" stroke="#d6d6d6" stroke-width="1.600" stroke-width="1.500"/><path d="M3.500 0.500 V3 M0.500 4 H2.500 M14.500 14.500 V16.500 M15.500 13.500 H17.500 M3.500 14.500 V16.500 M14.500 0.500 L17.500 3.500" fill="none" stroke="#d6d6d6" stroke-width="1.600" stroke-width="1.300"/></svg>
<svg style="left:1621px;top:747px" width="14" height="17"><rect x="0.500" y="7" width="13" height="9.500" rx="1" fill="#d6d6d6"/><path d="M3.500 7 V4.500 A3.500 3.500 0 0 1 10.500 4.500 V7" fill="none" stroke="#d6d6d6" stroke-width="1.600" stroke-width="1.700"/><circle cx="7" cy="11.500" r="1.400" fill="#535353"/></svg>
<div class="t" style="left:1646px;top:747px;font-size:15px;color:#d8d8d8;">填充:</div>
<div class="a" style="left:1687px;top:745px;width:68px;height:23px;background:#454545;border:1px solid #606060;border-radius:3px"></div>
<div class="a" style="left:1735px;top:746px;width:1px;height:21px;background:#606060;"></div>
<div class="t" style="left:1691px;top:749px;font-size:13px;color:#f0f0f0;">100%</div>
<svg style="left:1741px;top:755px" width="9" height="6"><path d="M1 1 L4.5 5 L8 1" fill="none" stroke="#d0d0d0" stroke-width="1.3"/></svg>
<div class="a" style="left:1456px;top:772px;width:443px;height:225px;background:#535353;"></div>
<div class="a" style="left:1493px;top:772px;width:1px;height:225px;background:#444;"></div>
<div class="a" style="left:1513px;top:775.5px;width:10px;height:1.2px;background:#9a9a9a;"></div>
<div class="a" style="left:1456px;top:790px;width:443px;height:1px;background:#474747;"></div>
<div class="a" style="left:1494px;top:791px;width:406px;height:50px;background:#6b6b6b;"></div>
<div class="a" style="left:1456px;top:841px;width:443px;height:2px;background:#474747;"></div>
<svg style="left:1510px;top:809px" width="16" height="18" viewBox="0 0 17 17" preserveAspectRatio="none"><path d="M0 0 H17 V5 H15.400 V2.200 H9.800 V14.800 Q9.800 15.500 12.800 15.600 V17 H4.200 V15.600 Q7.200 15.500 7.200 14.800 V2.200 H1.600 V5 H0 Z" fill="#e8e8e8" stroke="#e8e8e8" stroke-width="0"/></svg>
<div class="t" style="left:1551px;top:811px;font-size:13px;color:#f0f0f0;">4</div>
<svg style="left:1466px;top:811px" width="17" height="13"><path d="M0.500 6.500 Q8.500 -3 16.500 6.500 Q8.500 16 0.500 6.500 Z" fill="#f0f0f0"/><circle cx="8.500" cy="6.500" r="3.400" fill="#535353"/><circle cx="8.500" cy="6.500" r="1.700" fill="#f0f0f0"/></svg>
<svg style="left:1496px;top:795px" width="46" height="46"><path d="M0.500 14 V0.500 H15 M30 0.500 H44.700 V14 M44.700 31 V44.700 H30 M15 44.700 H0.500 V31" fill="none" stroke="#f0f0f0" stroke-width="1.200"/></svg>
<div class="a" style="left:1456px;top:892px;width:443px;height:2px;background:#474747;"></div>
<svg style="left:1510px;top:860px" width="16" height="18" viewBox="0 0 17 17" preserveAspectRatio="none"><path d="M0 0 H17 V5 H15.400 V2.200 H9.800 V14.800 Q9.800 15.500 12.800 15.600 V17 H4.200 V15.600 Q7.200 15.500 7.200 14.800 V2.200 H1.600 V5 H0 Z" fill="#e8e8e8" stroke="#e8e8e8" stroke-width="0"/></svg>
<div class="t" style="left:1551px;top:862px;font-size:13px;color:#f0f0f0;">5</div>
<div class="a" style="left:1467px;top:861px;width:16px;height:16px;border:1px solid #5e5e5e;background:#505050"></div>
<div class="a" style="left:1456px;top:943px;width:443px;height:2px;background:#474747;"></div>
<svg style="left:1510px;top:911px" width="16" height="18" viewBox="0 0 17 17" preserveAspectRatio="none"><path d="M0 0 H17 V5 H15.400 V2.200 H9.800 V14.800 Q9.800 15.500 12.800 15.600 V17 H4.200 V15.600 Q7.200 15.500 7.200 14.800 V2.200 H1.600 V5 H0 Z" fill="#e8e8e8" stroke="#e8e8e8" stroke-width="0"/></svg>
<div class="t" style="left:1551px;top:913px;font-size:13px;color:#f0f0f0;">6</div>
<div class="a" style="left:1467px;top:912px;width:16px;height:16px;border:1px solid #5e5e5e;background:#505050"></div>
<div class="a" style="left:1456px;top:994px;width:443px;height:2px;background:#474747;"></div>
<svg style="left:1510px;top:962px" width="16" height="18" viewBox="0 0 17 17" preserveAspectRatio="none"><path d="M0 0 H17 V5 H15.400 V2.200 H9.800 V14.800 Q9.800 15.500 12.800 15.600 V17 H4.200 V15.600 Q7.200 15.500 7.200 14.800 V2.200 H1.600 V5 H0 Z" fill="#e8e8e8" stroke="#e8e8e8" stroke-width="0"/></svg>
<div class="t" style="left:1551px;top:964px;font-size:13px;color:#f0f0f0;">7</div>
<div class="a" style="left:1467px;top:963px;width:16px;height:16px;border:1px solid #5e5e5e;background:#505050"></div>
<div class="a" style="left:1900px;top:772px;width:20px;height:225px;background:#4e4e4e;"></div>
<svg style="left:1905px;top:784px" width="10" height="6"><path d="M1 5 L5 1 L9 5" fill="none" stroke="#9a9a9a" stroke-width="1.200"/></svg>
<div class="a" style="left:1902px;top:850px;width:15px;height:64px;background:#6a6a6a;"></div>
<div class="a" style="left:1908px;top:935px;width:14px;height:76px;background:#1f2a33;border:1px solid #5d7484;border-radius:3px"></div>
<div class="a" style="left:1912px;top:984.0px;width:5px;height:1.5px;background:#2aa7e8;"></div>
<div class="a" style="left:1912px;top:986.8px;width:5px;height:1.5px;background:#2aa7e8;"></div>
<div class="a" style="left:1912px;top:989.6px;width:5px;height:1.5px;background:#2aa7e8;"></div>
<div class="a" style="left:1912px;top:992.4px;width:5px;height:1.5px;background:#2aa7e8;"></div>
<div class="a" style="left:1912px;top:995.2px;width:5px;height:1.5px;background:#2aa7e8;"></div>
<div class="a" style="left:1912px;top:998.0px;width:5px;height:1.5px;background:#2aa7e8;"></div>
<div class="a" style="left:1912px;top:1000.8px;width:5px;height:1.5px;background:#2aa7e8;"></div>
<div class="a" style="left:1912px;top:1003.6px;width:5px;height:1.5px;background:#2aa7e8;"></div>
<div class="a" style="left:1912px;top:1006.4px;width:5px;height:1.5px;background:#2aa7e8;"></div>
<div class="a" style="left:1456px;top:996px;width:463px;height:1px;background:#444;"></div>
<svg style="left:1665px;top:1004px" width="20" height="18"><rect x="1" y="5" width="10" height="7.500" rx="3.700" fill="none" stroke="#8c8c8c" stroke-width="1.500"/><rect x="8" y="5" width="10" height="7.500" rx="3.700" fill="none" stroke="#8c8c8c" stroke-width="1.500"/><path d="M6 8.800 H13" stroke="#8c8c8c" stroke-width="1.500"/></svg>
<div class="t" style="left:1701px;top:1002px;font-size:19px;color:#d6d6d6;font-style:italic;font-family:'Liberation Sans',sans-serif">fx</div>
<svg style="left:1716px;top:1021px" width="5" height="3"><path d="M0 0 H5 L2.500 3 Z" fill="#d6d6d6"/></svg>
<svg style="left:1734px;top:1004px" width="20" height="18"><rect x="0.500" y="2" width="16" height="12" fill="#d6d6d6"/><circle cx="8.500" cy="8" r="3.600" fill="#535353"/></svg>
<svg style="left:1768px;top:1004px" width="20" height="18"><circle cx="8" cy="9" r="6.300" fill="none" stroke="#d6d6d6" stroke-width="1.600" stroke-width="1.500"/><path d="M3.600 13.400 A6.300 6.300 0 0 1 12.400 4.600 Z" fill="#d6d6d6"/></svg>
<svg style="left:1783px;top:1021px" width="5" height="3"><path d="M0 0 H5 L2.500 3 Z" fill="#d6d6d6"/></svg>
<svg style="left:1801px;top:1004px" width="20" height="18"><path d="M0.500 3 H6.500 L8 5 H16.500 V15 H0.500 Z" fill="#d6d6d6"/><path d="M0.500 5.700 H16.500" stroke="#535353" stroke-width="0.800"/></svg>
<svg style="left:1836px;top:1004px" width="20" height="18"><path d="M1 2.500 H14 V14.500 H6 L1 10 Z" fill="none" stroke="#d6d6d6" stroke-width="1.600" stroke-width="1.600"/><path d="M1 10 H6 V14.500" fill="none" stroke="#d6d6d6" stroke-width="1.600" stroke-width="1.300"/></svg>
<svg style="left:1869px;top:1004px" width="16" height="18"><path d="M0.500 4 H14.500 M5 3.500 V1.500 H10 V3.500" fill="none" stroke="#d6d6d6" stroke-width="1.600" stroke-width="1.500"/><path d="M2.200 5.500 V16.500 H12.800 V5.500" fill="none" stroke="#d6d6d6" stroke-width="1.600" stroke-width="1.600"/><path d="M5.300 7 V14.500 M7.500 7 V14.500 M9.700 7 V14.500" stroke="#d6d6d6" stroke-width="1.100"/></svg>
<svg style="left:1580px;top:805px" width="140" height="125"><path d="M123 110 L29 25.200" stroke="#ee1c1c" stroke-width="2.800"/><path d="M16.600 14 L33.700 21.200 L25.400 30.200 Z" fill="#ee1c1c"/></svg>
<div class="a" style="left:0;top:1030px;width:1920px;height:40px;background:linear-gradient(to bottom,rgba(255,255,255,0.030),rgba(0,0,0,0.100)),linear-gradient(to right,#0f0f0d 0px,#10100e 60px,#262626 330px,#2d2d2d 420px,#323232 700px,#323232 1250px,#352e2e 1340px,#3b2929 1430px,#372828 1490px,#2e2727 1570px,#272626 1650px,#1e1e1e 1710px,#141414 1780px,#101010 1920px)"></div>
<svg style="left:19.500px;top:1044.500px" width="20.500" height="20.500" viewBox="0 0 22 22"><path d="M0 3 L9 1.700 V10.300 H0 Z M10.500 1.500 L22 0 V10.300 H10.500 Z M0 11.700 H9 V20.300 L0 19 Z M10.500 11.700 H22 V22 L10.500 20.500 Z" fill="#fff"/></svg>
<div class="a" style="left:60px;top:1033px;width:205px;height:37px;background:#f2f2f2;"></div>
<svg style="left:66px;top:1041px" width="26" height="26"><circle cx="12" cy="13" r="8.500" fill="none" stroke="#2b8fe6" stroke-width="3.600"/><path d="M5 13.500 H19.500" stroke="#2b8fe6" stroke-width="3"/><path d="M14 17 H22 V24 H12 Z" fill="#f2f2f2"/><path d="M1.500 18 Q8 1 24 3" fill="none" stroke="#6bb8f5" stroke-width="1.800"/></svg>
<svg style="left:95px;top:1052px" width="7" height="5"><path d="M0 5 H7 L3.500 0 Z" fill="#a4a4a4"/></svg>
<div class="t" style="left:109px;top:1046px;font-size:15px;color:#111;">外教杀害女生案开庭</div>
<div class="a" style="left:265px;top:1033px;width:70px;height:37px;background:#1e90ff;"></div>
<div class="t" style="left:270px;top:1046px;font-size:15px;color:#fff;">搜索一下</div>
<svg style="left:357px;top:1045px" width="28" height="22"><rect x="1" y="1.500" width="26" height="17.500" fill="#a4d6f8" stroke="#6ab6ee" stroke-width="1.200"/><circle cx="8.500" cy="8.500" r="4.200" fill="#e9f4fd" stroke="#4a9be0" stroke-width="0.800"/><path d="M8.500 8.500 V4.300 A4.200 4.200 0 0 1 12.700 8.500 Z" fill="#f5b942"/><path d="M16 5 H24 M16 8.500 H24 M16 12 H24" stroke="#4a9be0" stroke-width="1.400"/><path d="M4 15.500 H24" stroke="#f0a030" stroke-width="1.200"/><circle cx="14" cy="15.500" r="1.300" fill="#4a9be0"/></svg>
<svg style="left:420px;top:1040px" width="28" height="30"><path d="M5 16.500 H22.500 Q23 6 14 5.500 Q6 5.500 3.500 13" fill="none" stroke="#1a86e0" stroke-width="5"/><path d="M5.500 14 Q2 24 12 26.800 Q18 28 23.500 24.500 V19.500 Q18 23 13 21.500 Q8 19.500 9 14 Z" fill="#1a86e0"/><path d="M1.500 14.500 Q3 6 10 3.500 Q5 8 4.500 15 Z" fill="#1a86e0"/></svg>
<svg style="left:480px;top:1039px" width="30" height="31"><circle cx="15" cy="16" r="13.500" fill="#f4f4f4"/><circle cx="15" cy="16" r="11.300" fill="#58c12e"/><path d="M8.500 16.500 H21.500 Q21.500 10.500 15 10.500 Q8.800 11 8.500 17 Q9 22.500 15.500 22.500 Q19 22.500 21 21" fill="none" stroke="#fff" stroke-width="2.800"/><path d="M3 27 Q4 12 24 3" fill="none" stroke="#58c12e" stroke-width="1.600"/><path d="M24 3 Q27 2 28 4" fill="none" stroke="#58c12e" stroke-width="1.200"/></svg>
<div class="a" style="left:527px;top:1030px;width:61px;height:40px;background:#595959;"></div>
<div class="a" style="left:543px;top:1040px;width:27px;height:26px;background:#001e36;border:2px solid #31c5f0"></div>
<div class="t" style="left:548px;top:1044.5px;font-size:17px;color:#31c5f0;letter-spacing:-1px">Ps</div>
<div class="t" style="left:1392px;top:1037.5px;font-size:16px;color:#fff;">48℃</div>
<div class="t" style="left:1381px;top:1057px;font-size:15px;color:#fff;">CPU温度</div>
<svg style="left:1465px;top:1048px" width="18" height="11"><path d="M1 10 L9 2 L17 10" fill="none" stroke="#fff" stroke-width="1.600"/></svg>
<svg style="left:1492px;top:1044px" width="24" height="22"><rect x="1.500" y="3" width="17" height="15" fill="none" stroke="#bdbdbd" stroke-width="1.400"/><path d="M5 14 V8 Q8 5 12 8 M12 6 V14 M5 11 H15" stroke="#c0392b" stroke-width="1.600" fill="none"/><circle cx="17" cy="16" r="4.800" fill="#e81123"/><path d="M17 13 V17 M17 18.200 V19.200" stroke="#fff" stroke-width="1.500"/></svg>
<svg style="left:1522px;top:1044px" width="22" height="22"><circle cx="11" cy="11" r="10" fill="#f2d822"/><path d="M11 1 A10 10 0 0 1 21 11 Q18 5 11 4.500 Q8 4.500 6 6 Q8 1.500 11 1 Z" fill="#3aa535"/><path d="M11 21 A10 10 0 0 1 1 11 Q4 17 11 17.500 Q14 17.500 16 16 Q14 20.500 11 21 Z" fill="#3aa535"/><path d="M6.800 11 H15.200 M11 6.800 V15.200" stroke="#3aa535" stroke-width="2.200"/></svg>
<svg style="left:1551px;top:1046px" width="24" height="18"><rect x="6.500" y="5" width="15" height="9" fill="#fff"/><rect x="8" y="6.500" width="12" height="6" fill="#d8d8d8"/><rect x="21.500" y="7.500" width="1.800" height="4" fill="#fff"/><path d="M2 2 V5 M5 2 V5 M1 5 H6 V7.500 Q3.500 9 3.500 12 H6.500" stroke="#fff" stroke-width="1.200" fill="none"/></svg>
<svg style="left:1584px;top:1045px" width="22" height="20"><g fill="none" stroke="#fff"><path d="M3 17 A14 14 0 0 1 17 3" stroke-width="1.300" opacity="0.600"/><path d="M7 17 A10 10 0 0 1 17 7" stroke-width="1.300" opacity="0.800"/><path d="M11 17 A6 6 0 0 1 17 11" stroke-width="1.400"/></g><circle cx="16" cy="17" r="1.700" fill="#fff"/></svg>
<svg style="left:1612px;top:1044px" width="24" height="22"><path d="M1.500 8 H5 L10 3.500 V18.500 L5 14 H1.500 Z" fill="none" stroke="#fff" stroke-width="1.300"/><path d="M13 8 Q15 11 13 14" fill="none" stroke="#fff" stroke-width="1.200"/><path d="M16 5.500 Q19.500 11 16 16.500" fill="none" stroke="#fff" stroke-width="1.200" opacity="0.700"/><path d="M19 3 Q24 11 19 19" fill="none" stroke="#fff" stroke-width="1.200" opacity="0.350"/></svg>
<div class="t" style="left:1644px;top:1046px;font-size:18px;color:#fff;">中</div>
<div class="a" style="left:1679px;top:1046px;width:18px;height:18px;background:#fff"></div>
<div class="t" style="left:1680px;top:1047px;font-size:16px;color:#000;">拼</div>
<div class="t" style="letter-spacing:0.11px;left:1720.5px;top:1037px;font-size:15px;color:#fff;">23:01 周四</div>
<div class="t" style="letter-spacing:1.00px;left:1715.5px;top:1056px;font-size:15px;color:#fff;">2021/11/25</div>
<svg style="left:1818px;top:1044px" width="30" height="26"><rect x="3.500" y="0.500" width="17.500" height="19.500" fill="#fff"/><path d="M1.500 2.500 V19" stroke="#fff" stroke-width="1.200"/><path d="M7 5 H17.500 M7 9 H17.500 M7 13 H13" stroke="#222" stroke-width="1.700"/><rect x="13.800" y="10" width="15.500" height="16" fill="#e30c14"/></svg>
<div class="t" style="left:1836.5px;top:1056px;font-size:13px;color:#fff;">1</div>
<svg style="left:1868px;top:1044px" width="34" height="28"><path d="M1 0.500 H21 V17.500 H10 L6 21 V17.500 H1 Z" fill="#fff"/><path d="M4.500 5 H17.500 M4.500 9 H17.500 M4.500 13 H13" stroke="#222" stroke-width="1.600"/><circle cx="20.500" cy="20" r="9" fill="#2a2a2a" stroke="#8a8a8a" stroke-width="1.200"/></svg>
<div class="t" style="left:1884px;top:1055px;font-size:16px;color:#fff;font-weight:bold">4</div>
<div class="a" style="left:1915px;top:1030px;width:1px;height:40px;background:#5a5a5a;"></div>
<!--BODY-->
</body></html>
